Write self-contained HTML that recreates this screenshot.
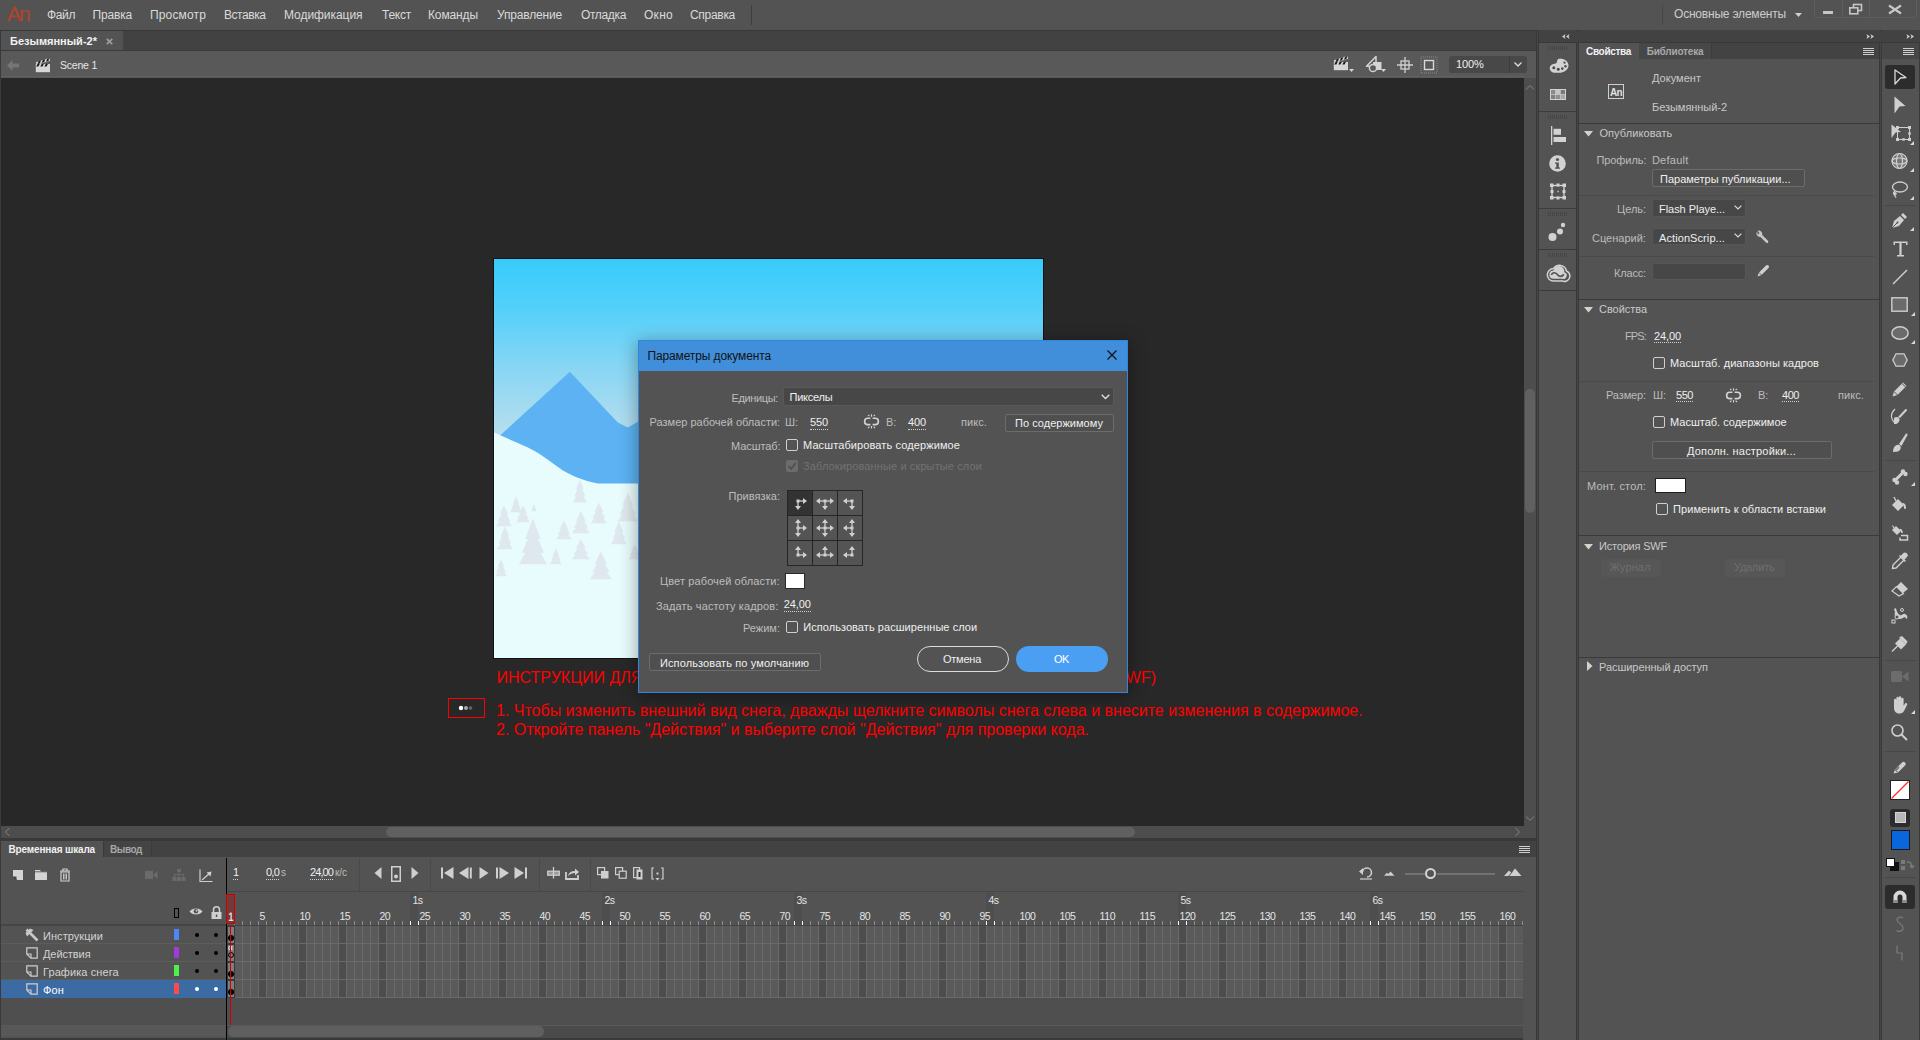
<!DOCTYPE html>
<html><head><meta charset="utf-8">
<style>
*{margin:0;padding:0;box-sizing:border-box}
html,body{width:1920px;height:1040px;overflow:hidden;background:#535353;font-family:"Liberation Sans",sans-serif;color:#d8d8d8;font-size:11px}
.a{position:absolute}
.t{position:absolute;white-space:nowrap;line-height:1}
svg.a{overflow:visible}
</style></head><body>

<div class="a" style="left:0px;top:0px;width:1920px;height:30px;background:#535353;"></div>
<div class="a" style="left:0px;top:30px;width:1920px;height:1px;background:#383838;"></div>
<div class="t" style="left:7px;top:3px;font-size:21px;color:#a9452f;letter-spacing:-2.093px;-webkit-text-stroke:0.35px #a9452f;">An</div>
<div class="t" style="left:47px;top:9px;font-size:12px;color:#dadada;letter-spacing:-0.375px;">Файл</div>
<div class="t" style="left:92.5px;top:9px;font-size:12px;color:#dadada;letter-spacing:-0.172px;">Правка</div>
<div class="t" style="left:150px;top:9px;font-size:12px;color:#dadada;letter-spacing:0.150px;">Просмотр</div>
<div class="t" style="left:224px;top:9px;font-size:12px;color:#dadada;letter-spacing:-0.443px;">Вставка</div>
<div class="t" style="left:284px;top:9px;font-size:12px;color:#dadada;letter-spacing:-0.053px;">Модификация</div>
<div class="t" style="left:382px;top:9px;font-size:12px;color:#dadada;letter-spacing:-0.242px;">Текст</div>
<div class="t" style="left:428px;top:9px;font-size:12px;color:#dadada;letter-spacing:-0.120px;">Команды</div>
<div class="t" style="left:497px;top:9px;font-size:12px;color:#dadada;letter-spacing:-0.171px;">Управление</div>
<div class="t" style="left:581px;top:9px;font-size:12px;color:#dadada;letter-spacing:-0.347px;">Отладка</div>
<div class="t" style="left:644px;top:9px;font-size:12px;color:#dadada;letter-spacing:0.279px;">Окно</div>
<div class="t" style="left:690px;top:9px;font-size:12px;color:#dadada;letter-spacing:-0.296px;">Справка</div>
<div class="a" style="left:751px;top:5px;width:1px;height:20px;background:#3f3f3f;"></div>
<div class="a" style="left:1662px;top:5px;width:1px;height:20px;background:#454545;"></div>
<div class="t" style="left:1674px;top:8px;font-size:12px;color:#cccccc;letter-spacing:-0.204px;">Основные элементы</div>
<svg class="a" style="left:1795px;top:13px;" width="7" height="4" viewBox="0 0 7 4"><path d="M0 0H7L3.5 4Z" fill="#cfcfcf"/></svg>
<div class="a" style="left:1814px;top:-2px;width:103px;height:20px;border:1px solid #5e5e5e;border-radius:3px"></div>
<div class="a" style="left:1842px;top:0px;width:1px;height:18px;background:#5e5e5e;"></div>
<div class="a" style="left:1869px;top:0px;width:1px;height:18px;background:#5e5e5e;"></div>
<div class="a" style="left:1823px;top:11px;width:10px;height:3px;background:#c6c6c6;"></div>
<svg class="a" style="left:1849px;top:4px;" width="14" height="11" viewBox="0 0 14 11"><rect x="4.5" y="0.5" width="8" height="6" fill="none" stroke="#c6c6c6" stroke-width="1.6"/><rect x="0.8" y="3.8" width="8" height="6" fill="#535353" stroke="#c6c6c6" stroke-width="1.6"/></svg>
<svg class="a" style="left:1888px;top:5px;" width="14" height="9" viewBox="0 0 14 9"><path d="M1 0.5L13 8.5M13 0.5L1 8.5" stroke="#c6c6c6" stroke-width="2.2"/></svg>
<div class="a" style="left:0px;top:31px;width:1537px;height:20px;background:#424242;"></div>
<div class="a" style="left:0px;top:31px;width:1px;height:1009px;background:#3a3a3a;"></div>
<div class="a" style="left:1px;top:31px;width:122px;height:20px;background:#535353;"></div>
<div class="t" style="left:10px;top:36px;font-size:11px;color:#f2f2f2;font-weight:bold;">Безымянный-2*</div>
<svg class="a" style="left:106px;top:38px;" width="7" height="7" viewBox="0 0 7 7"><path d="M0.8 0.8L6.2 6.2M6.2 0.8L0.8 6.2" stroke="#9b9b9b" stroke-width="1.8"/></svg>
<div class="a" style="left:1px;top:51px;width:1536px;height:27px;background:#595959;"></div>
<div class="a" style="left:0px;top:50px;width:1537px;height:1px;background:#3a3a3a;"></div>
<div class="a" style="left:1px;top:76px;width:1523px;height:1px;background:#606060;"></div>
<svg class="a" style="left:7px;top:60px;" width="12" height="11" viewBox="0 0 12 11"><path d="M0 5.5L5.5 0V3.5H12V7.5H5.5V11Z" fill="#767676"/></svg>
<svg class="a" style="left:35px;top:57px;" width="22" height="18" viewBox="0 0 22 18"><rect x="0.8" y="7" width="14.2" height="8.2" fill="#d6d6d6"/><path d="M0.8 5.2L14.2 1L15.2 3.8L1.6 8Z" fill="#d6d6d6"/><path d="M3.6 4.3L6 3.6L4.8 6.6L2.4 7.3ZM7.9 3L10.3 2.3L9.1 5.3L6.7 6ZM12.2 1.7L14.2 1.1L13.4 4L11 4.7Z" fill="#1c1c1c"/><path d="M2.5 7H4.7L3.4 9.4H1.2ZM6.6 7H8.8L7.5 9.4H5.3ZM10.7 7H12.9L11.6 9.4H9.4Z" fill="#1c1c1c"/></svg>
<div class="t" style="left:60px;top:60px;font-size:10.5px;color:#e6e6e6;letter-spacing:-0.218px;">Scene 1</div>
<svg class="a" style="left:1333px;top:55px;" width="22" height="18" viewBox="0 0 22 18"><rect x="0.8" y="7" width="14.2" height="8.2" fill="#d6d6d6"/><path d="M0.8 5.2L14.2 1L15.2 3.8L1.6 8Z" fill="#d6d6d6"/><path d="M3.6 4.3L6 3.6L4.8 6.6L2.4 7.3ZM7.9 3L10.3 2.3L9.1 5.3L6.7 6ZM12.2 1.7L14.2 1.1L13.4 4L11 4.7Z" fill="#1c1c1c"/><path d="M2.5 7H4.7L3.4 9.4H1.2ZM6.6 7H8.8L7.5 9.4H5.3ZM10.7 7H12.9L11.6 9.4H9.4Z" fill="#1c1c1c"/><path d="M16 14H21L18.5 17Z" fill="#d4d4d4"/></svg>
<svg class="a" style="left:1365px;top:55px;" width="22" height="18" viewBox="0 0 22 18"><path d="M1.5 11.3L11 1.5V11.3Z" fill="none" stroke="#d4d4d4" stroke-width="1.5" stroke-linejoin="round"/><rect x="8" y="7" width="8.5" height="8" fill="#d4d4d4"/><circle cx="8" cy="13" r="3.6" fill="#595959" stroke="#d4d4d4" stroke-width="1.5"/><path d="M16 14H21L18.5 17Z" fill="#d4d4d4"/></svg>
<svg class="a" style="left:1397px;top:57px;" width="16" height="16" viewBox="0 0 16 16"><path d="M8 0V16M0 8H16" stroke="#d0d0d0" stroke-width="1.3"/><rect x="4" y="4" width="8" height="8" fill="none" stroke="#d0d0d0" stroke-width="1.3"/></svg>
<svg class="a" style="left:1421px;top:57px;" width="16" height="16" viewBox="0 0 16 16"><rect x="0" y="0" width="16" height="16" fill="none" stroke="#8a8a8a" stroke-width="1" stroke-dasharray="1 1"/><rect x="3.5" y="3.5" width="9" height="9" fill="#595959" stroke="#d8d8d8" stroke-width="1.4"/></svg>
<div class="a" style="left:1449px;top:56px;width:78px;height:17px;background:#484848;border-radius:3px"></div>
<div class="a" style="left:1509px;top:56px;width:1px;height:17px;background:#3d3d3d;"></div>
<div class="t" style="left:1456px;top:59px;font-size:11px;color:#f0f0f0;letter-spacing:-0.158px;">100%</div>
<svg class="a" style="left:1514px;top:62px;" width="8" height="5" viewBox="0 0 8 5"><path d="M0.5 0.5L4 4L7.5 0.5" fill="none" stroke="#dedede" stroke-width="1.3"/></svg>
<div class="a" style="left:1px;top:78px;width:1523px;height:748px;background:#282828;"></div>
<div class="a" style="left:1524px;top:78px;width:12px;height:748px;background:#4d4d4d;"></div>
<svg class="a" style="left:1525px;top:84px;" width="10" height="6" viewBox="0 0 10 6"><path d="M1 5.5L5 1.5L9 5.5" fill="none" stroke="#6e6e6e" stroke-width="1.2"/></svg>
<div class="a" style="left:1525px;top:389px;width:10px;height:124px;background:#606060;border-radius:5px"></div>
<svg class="a" style="left:1525px;top:816px;" width="10" height="6" viewBox="0 0 10 6"><path d="M1 0.5L5 4.5L9 0.5" fill="none" stroke="#6e6e6e" stroke-width="1.2"/></svg>
<div class="a" style="left:1px;top:826px;width:1535px;height:12px;background:#4d4d4d;"></div>
<svg class="a" style="left:4px;top:827px;" width="6" height="10" viewBox="0 0 6 10"><path d="M5.5 1L1.5 5L5.5 9" fill="none" stroke="#6e6e6e" stroke-width="1.2"/></svg>
<div class="a" style="left:386px;top:827px;width:749px;height:10px;background:#606060;border-radius:5px"></div>
<svg class="a" style="left:1515px;top:827px;" width="6" height="10" viewBox="0 0 6 10"><path d="M0.5 1L4.5 5L0.5 9" fill="none" stroke="#6e6e6e" stroke-width="1.2"/></svg>
<div class="a" style="left:0px;top:838px;width:1537px;height:3px;background:#393939;"></div>
<div class="a" style="left:1536px;top:31px;width:1px;height:1009px;background:#383838;"></div>
<div class="a" style="left:1537px;top:31px;width:1px;height:1009px;background:#464646;"></div>
<div class="a" style="left:1538px;top:31px;width:1px;height:1009px;background:#393939;"></div>
<div class="a" style="left:493px;top:258px;width:551px;height:401px;background:#111;"></div>
<svg class="a" style="left:494px;top:259px" width="549" height="399" viewBox="0 0 550 400" preserveAspectRatio="none"><defs><linearGradient id="sky" x1="0" y1="0" x2="0" y2="1"><stop offset="0" stop-color="#38cbfb"/><stop offset="0.12" stop-color="#52d0fa"/><stop offset="0.28" stop-color="#8ad6f4"/><stop offset="0.44" stop-color="#b7deee"/><stop offset="1" stop-color="#c4e2ee"/></linearGradient></defs>
<rect x="0" y="0" width="550" height="400" fill="url(#sky)"/>
<path d="M6 177L76 113L124 164L134 169L150 160L200 150L260 160L400 170L550 190V400H0Z" fill="#5cb2f2"/>
<path d="M0 174L34 189C50 197 60 206 69 212C82 219 92 223 104 225H550V400H0Z" fill="#e9fcfd"/>
<path d="M86.0 221.0L82.2 231.3H89.8ZM86.0 225.6L80.4 238.2H91.6ZM86.0 231.3L79.0 244.0H93.0ZM22.0 238.0L18.7 245.2H25.3ZM22.0 241.2L17.2 250.0H26.8ZM22.0 245.2L16.0 254.0H28.0ZM40.0 246.0L38.4 249.2H41.6ZM40.0 247.4L37.6 251.2H42.4ZM40.0 249.2L37.0 253.0H43.0ZM10.0 247.0L5.6 256.4H14.4ZM10.0 251.2L3.6 262.8H16.4ZM10.0 256.4L2.0 268.0H18.0ZM29.0 247.0L25.1 254.7H32.9ZM29.0 250.4L23.4 259.8H34.6ZM29.0 254.7L22.0 264.0H36.0ZM39.0 260.0L31.3 280.7H46.7ZM39.0 269.2L27.8 294.5H50.2ZM39.0 280.7L25.0 306.0H53.0ZM11.0 268.0L6.6 278.4H15.4ZM11.0 272.6L4.6 285.2H17.4ZM11.0 278.4L3.0 291.0H19.0ZM70.0 262.0L65.6 270.6H74.4ZM70.0 265.8L63.6 276.2H76.4ZM70.0 270.6L62.0 281.0H78.0ZM87.0 253.0L82.0 262.9H92.0ZM87.0 257.4L79.8 269.5H94.2ZM87.0 262.9L78.0 275.0H96.0ZM87.0 281.0L82.0 290.0H92.0ZM87.0 285.0L79.8 296.0H94.2ZM87.0 290.0L78.0 301.0H96.0ZM105.0 244.0L100.6 253.4H109.4ZM105.0 248.2L98.6 259.8H111.4ZM105.0 253.4L97.0 265.0H113.0ZM134.0 234.0L128.5 247.1H139.5ZM134.0 239.8L126.0 255.8H142.0ZM134.0 247.1L124.0 263.0H144.0ZM125.0 263.0L120.6 273.4H129.4ZM125.0 267.6L118.6 280.2H131.4ZM125.0 273.4L117.0 286.0H133.0ZM107.0 293.0L101.0 305.6H113.0ZM107.0 298.6L98.2 314.0H115.8ZM107.0 305.6L96.0 321.0H118.0ZM62.0 290.0L58.7 297.2H65.3ZM62.0 293.2L57.2 302.0H66.8ZM62.0 297.2L56.0 306.0H68.0ZM7.0 301.0L3.7 308.6H10.3ZM7.0 304.4L2.2 313.8H11.8ZM7.0 308.6L1.0 318.0H13.0ZM141.0 286.0L137.7 292.8H144.3ZM141.0 289.0L136.2 297.2H145.8ZM141.0 292.8L135.0 301.0H147.0Z" fill="#dfe6ed" fill-opacity="0.9"/></svg>
<div class="t" style="left:496.5px;top:670px;font-size:16px;color:#ff0000;">ИНСТРУКЦИИ ДЛЯ</div>
<div class="t" style="right:764px;top:670px;font-size:16px;color:#ff0000;">WF)</div>
<div class="a" style="left:448px;top:698px;width:37px;height:20px;border:1px solid #ff0000"></div>
<svg class="a" style="left:455px;top:702px;" width="22" height="12" viewBox="0 0 22 12"><defs><filter id="bl"><feGaussianBlur stdDeviation="0.9"/></filter></defs><defs><filter id="bl2"><feGaussianBlur stdDeviation="0.5"/></filter></defs><g filter="url(#bl2)"><circle cx="6" cy="6" r="2.2" fill="#fff"/><circle cx="11" cy="6" r="2" fill="#aaa"/><circle cx="15.5" cy="6" r="1.8" fill="#666"/></g></svg>
<div class="t" style="left:496px;top:703px;font-size:16px;color:#ff0000;">1. Чтобы изменить внешний вид снега, дважды щелкните символы снега слева и внесите изменения в содержимое.</div>
<div class="t" style="left:496px;top:722px;font-size:16px;color:#ff0000;">2. Откройте панель &quot;Действия&quot; и выберите слой &quot;Действия&quot; для проверки кода.</div>
<div class="a" style="left:638px;top:340px;width:490px;height:353px;box-shadow:0 3px 16px 2px rgba(0,0,0,0.3)"></div>
<div class="a" style="left:638px;top:340px;width:490px;height:353px;background:#2f86df;"></div>
<div class="a" style="left:639px;top:341px;width:488px;height:30px;background:#418fdb;"></div>
<div class="a" style="left:639px;top:371px;width:488px;height:321px;background:#535353;"></div>
<div class="t" style="left:647.4px;top:350px;font-size:12px;color:#121212;letter-spacing:-0.116px;">Параметры документа</div>
<svg class="a" style="left:1107px;top:350px;" width="10" height="10" viewBox="0 0 10 10"><path d="M0.5 0.5L9.5 9.5M9.5 0.5L0.5 9.5" stroke="#111" stroke-width="1.2"/></svg>
<div class="t" style="left:731.5px;top:393px;font-size:11px;color:#bdbdbd;letter-spacing:-0.360px;">Единицы:</div>
<div class="a" style="left:782.5px;top:387px;width:331.5px;height:19px;background:#474747;border:1px solid #595959;border-radius:3px"></div>
<div class="t" style="left:789.5px;top:392px;font-size:11px;color:#efefef;letter-spacing:-0.223px;">Пикселы</div>
<svg class="a" style="left:1101px;top:394px;" width="9" height="6" viewBox="0 0 9 6"><path d="M0.7 0.7L4.5 4.5L8.3 0.7" fill="none" stroke="#e0e0e0" stroke-width="1.3"/></svg>
<div class="t" style="left:649.6px;top:417px;font-size:11px;color:#bdbdbd;">Размер рабочей области:</div>
<div class="t" style="left:785px;top:417px;font-size:11px;color:#bdbdbd;letter-spacing:-0.069px;">Ш:</div>
<div class="t" style="left:810px;top:417px;font-size:11px;color:#efefef;letter-spacing:-0.117px;">550</div>
<div class="a" style="left:810px;top:429px;width:18px;height:1px;border-top:1px dotted #cfcfcf"></div>
<svg class="a" style="left:863px;top:412px;" width="17" height="19" viewBox="0 0 17 19"><path d="M7.4 6.2H4.8A3.2 3.2 0 0 0 4.8 12.6H7.4M9.6 6.2H12.2A3.2 3.2 0 0 1 12.2 12.6H9.6" fill="none" stroke="#d4d4d4" stroke-width="1.6"/><path d="M8.5 2.3V4.8M8.5 14V16.5M5 2.8L6.4 4.2M12 2.8L10.6 4.2M5 16L6.4 14.6M12 16L10.6 14.6" stroke="#d4d4d4" stroke-width="1.1"/></svg>
<div class="t" style="left:886px;top:417px;font-size:11px;color:#bdbdbd;letter-spacing:-0.197px;">В:</div>
<div class="t" style="left:908px;top:417px;font-size:11px;color:#efefef;letter-spacing:-0.117px;">400</div>
<div class="a" style="left:908px;top:429px;width:18px;height:1px;border-top:1px dotted #cfcfcf"></div>
<div class="t" style="left:961px;top:417px;font-size:11px;color:#bdbdbd;letter-spacing:0.081px;">пикс.</div>
<div class="a" style="left:1004.5px;top:413.5px;width:109.5px;height:18px;border:1px solid #6c6c6c;border-radius:2px;background:#4f4f4f"></div>
<div class="t" style="left:1015px;top:418px;font-size:11px;color:#efefef;letter-spacing:0.029px;">По содержимому</div>
<div class="t" style="left:731px;top:441px;font-size:11px;color:#bdbdbd;letter-spacing:-0.077px;">Масштаб:</div>
<div class="a" style="left:786px;top:439px;width:12px;height:12px;border:1px solid #cfcfcf;border-radius:2px"></div>
<div class="t" style="left:803px;top:440px;font-size:11px;color:#efefef;letter-spacing:0.108px;">Масштабировать содержимое</div>
<div class="a" style="left:786px;top:460px;width:12px;height:12px;background:#6c6c6c;border-radius:2px"></div>
<svg class="a" style="left:786px;top:460px;" width="12" height="12" viewBox="0 0 12 12"><path d="M2.5 6L5 8.8L9.8 3.2" fill="none" stroke="#505050" stroke-width="1.8"/></svg>
<div class="t" style="left:803px;top:461px;font-size:11px;color:#727272;letter-spacing:0.119px;">Заблокированные и скрытые слои</div>
<div class="t" style="left:728.5px;top:491px;font-size:11px;color:#bdbdbd;letter-spacing:0.043px;">Привязка:</div>
<div class="a" style="left:787px;top:490px;width:76px;height:76px;background:#262626;"></div>
<div class="a" style="left:788px;top:491px;width:24px;height:24px;background:#333333;"></div>
<div class="a" style="left:813px;top:491px;width:24px;height:24px;background:#545454;"></div>
<div class="a" style="left:838px;top:491px;width:24px;height:24px;background:#545454;"></div>
<div class="a" style="left:788px;top:516px;width:24px;height:24px;background:#545454;"></div>
<div class="a" style="left:813px;top:516px;width:24px;height:24px;background:#545454;"></div>
<div class="a" style="left:838px;top:516px;width:24px;height:24px;background:#545454;"></div>
<div class="a" style="left:788px;top:541px;width:24px;height:24px;background:#545454;"></div>
<div class="a" style="left:813px;top:541px;width:24px;height:24px;background:#545454;"></div>
<div class="a" style="left:838px;top:541px;width:24px;height:24px;background:#545454;"></div>
<svg class="a" style="left:788px;top:491px;" width="75" height="75" viewBox="0 0 75 75"><path d="M10.0 10.0H18.0" stroke="#d0d0d0" stroke-width="1.3"/><path d="M19.0 10.0L15.0 7.0V13.0Z" fill="#d0d0d0"/><path d="M10.0 10.0V18.0" stroke="#d0d0d0" stroke-width="1.3"/><path d="M10.0 19.0L7.0 15.0H13.0Z" fill="#d0d0d0"/><rect x="8.5" y="8.5" width="3" height="3" fill="#d0d0d0"/><path d="M37.0 10.0H29.0" stroke="#d0d0d0" stroke-width="1.3"/><path d="M28.0 10.0L32.0 7.0V13.0Z" fill="#d0d0d0"/><path d="M37.0 10.0H45.0" stroke="#d0d0d0" stroke-width="1.3"/><path d="M46.0 10.0L42.0 7.0V13.0Z" fill="#d0d0d0"/><path d="M37.0 10.0V18.0" stroke="#d0d0d0" stroke-width="1.3"/><path d="M37.0 19.0L34.0 15.0H40.0Z" fill="#d0d0d0"/><rect x="35.5" y="8.5" width="3" height="3" fill="#d0d0d0"/><path d="M64.0 10.0H56.0" stroke="#d0d0d0" stroke-width="1.3"/><path d="M55.0 10.0L59.0 7.0V13.0Z" fill="#d0d0d0"/><path d="M64.0 10.0V18.0" stroke="#d0d0d0" stroke-width="1.3"/><path d="M64.0 19.0L61.0 15.0H67.0Z" fill="#d0d0d0"/><rect x="62.5" y="8.5" width="3" height="3" fill="#d0d0d0"/><path d="M10.0 37.0V29.0" stroke="#d0d0d0" stroke-width="1.3"/><path d="M10.0 28.0L7.0 32.0H13.0Z" fill="#d0d0d0"/><path d="M10.0 37.0V45.0" stroke="#d0d0d0" stroke-width="1.3"/><path d="M10.0 46.0L7.0 42.0H13.0Z" fill="#d0d0d0"/><path d="M10.0 37.0H18.0" stroke="#d0d0d0" stroke-width="1.3"/><path d="M19.0 37.0L15.0 34.0V40.0Z" fill="#d0d0d0"/><rect x="8.5" y="35.5" width="3" height="3" fill="#d0d0d0"/><path d="M37.0 37.0V29.0" stroke="#d0d0d0" stroke-width="1.3"/><path d="M37.0 28.0L34.0 32.0H40.0Z" fill="#d0d0d0"/><path d="M37.0 37.0V45.0" stroke="#d0d0d0" stroke-width="1.3"/><path d="M37.0 46.0L34.0 42.0H40.0Z" fill="#d0d0d0"/><path d="M37.0 37.0H29.0" stroke="#d0d0d0" stroke-width="1.3"/><path d="M28.0 37.0L32.0 34.0V40.0Z" fill="#d0d0d0"/><path d="M37.0 37.0H45.0" stroke="#d0d0d0" stroke-width="1.3"/><path d="M46.0 37.0L42.0 34.0V40.0Z" fill="#d0d0d0"/><rect x="35.5" y="35.5" width="3" height="3" fill="#d0d0d0"/><path d="M64.0 37.0V29.0" stroke="#d0d0d0" stroke-width="1.3"/><path d="M64.0 28.0L61.0 32.0H67.0Z" fill="#d0d0d0"/><path d="M64.0 37.0V45.0" stroke="#d0d0d0" stroke-width="1.3"/><path d="M64.0 46.0L61.0 42.0H67.0Z" fill="#d0d0d0"/><path d="M64.0 37.0H56.0" stroke="#d0d0d0" stroke-width="1.3"/><path d="M55.0 37.0L59.0 34.0V40.0Z" fill="#d0d0d0"/><rect x="62.5" y="35.5" width="3" height="3" fill="#d0d0d0"/><path d="M10.0 64.0V56.0" stroke="#d0d0d0" stroke-width="1.3"/><path d="M10.0 55.0L7.0 59.0H13.0Z" fill="#d0d0d0"/><path d="M10.0 64.0H18.0" stroke="#d0d0d0" stroke-width="1.3"/><path d="M19.0 64.0L15.0 61.0V67.0Z" fill="#d0d0d0"/><rect x="8.5" y="62.5" width="3" height="3" fill="#d0d0d0"/><path d="M37.0 64.0H29.0" stroke="#d0d0d0" stroke-width="1.3"/><path d="M28.0 64.0L32.0 61.0V67.0Z" fill="#d0d0d0"/><path d="M37.0 64.0H45.0" stroke="#d0d0d0" stroke-width="1.3"/><path d="M46.0 64.0L42.0 61.0V67.0Z" fill="#d0d0d0"/><path d="M37.0 64.0V56.0" stroke="#d0d0d0" stroke-width="1.3"/><path d="M37.0 55.0L34.0 59.0H40.0Z" fill="#d0d0d0"/><rect x="35.5" y="62.5" width="3" height="3" fill="#d0d0d0"/><path d="M64.0 64.0H56.0" stroke="#d0d0d0" stroke-width="1.3"/><path d="M55.0 64.0L59.0 61.0V67.0Z" fill="#d0d0d0"/><path d="M64.0 64.0V56.0" stroke="#d0d0d0" stroke-width="1.3"/><path d="M64.0 55.0L61.0 59.0H67.0Z" fill="#d0d0d0"/><rect x="62.5" y="62.5" width="3" height="3" fill="#d0d0d0"/></svg>
<div class="t" style="left:660px;top:576px;font-size:11px;color:#bdbdbd;letter-spacing:0.112px;">Цвет рабочей области:</div>
<div class="a" style="left:785px;top:573px;width:20px;height:16px;background:#fff;border:1px solid #2a2a2a"></div>
<div class="t" style="left:656px;top:601px;font-size:11px;color:#bdbdbd;letter-spacing:0.134px;">Задать частоту кадров:</div>
<div class="t" style="left:783.8px;top:599px;font-size:11px;color:#efefef;letter-spacing:-0.105px;">24,00</div>
<div class="a" style="left:784px;top:611px;width:27px;height:1px;border-top:1px dotted #cfcfcf"></div>
<div class="t" style="left:743px;top:623px;font-size:11px;color:#bdbdbd;">Режим:</div>
<div class="a" style="left:786px;top:621px;width:12px;height:12px;border:1px solid #cfcfcf;border-radius:2px"></div>
<div class="t" style="left:803.2px;top:622px;font-size:11px;color:#efefef;letter-spacing:0.058px;">Использовать расширенные слои</div>
<div class="a" style="left:649.3px;top:653.2px;width:171.7px;height:18.3px;border:1px solid #6c6c6c;border-radius:2px;background:#4f4f4f"></div>
<div class="t" style="left:660px;top:658px;font-size:11px;color:#efefef;letter-spacing:0.109px;">Использовать по умолчанию</div>
<div class="a" style="left:917px;top:646px;width:92px;height:26px;border:1.5px solid #dcdcdc;border-radius:13px"></div>
<div class="t" style="left:943px;top:654px;font-size:11px;color:#efefef;letter-spacing:-0.244px;">Отмена</div>
<div class="a" style="left:1016px;top:646px;width:92px;height:26px;background:#4b9ff2;border-radius:13px"></div>
<div class="t" style="left:1054px;top:654px;font-size:11px;color:#ffffff;letter-spacing:-0.447px;">OK</div>
<div class="a" style="left:1px;top:841px;width:1535px;height:199px;background:#535353;"></div>
<div class="a" style="left:1px;top:841px;width:1535px;height:16px;background:#424242;"></div>
<div class="a" style="left:1px;top:841px;width:102px;height:16px;background:#535353;"></div>
<div class="a" style="left:103px;top:841px;width:1px;height:16px;background:#3a3a3a;"></div>
<div class="t" style="left:8.5px;top:845px;font-size:10px;color:#f0f0f0;font-weight:bold;letter-spacing:-0.152px;">Временная шкала</div>
<div class="a" style="left:104px;top:841px;width:47px;height:16px;background:#444444;"></div>
<div class="a" style="left:151px;top:841px;width:1px;height:16px;background:#3a3a3a;"></div>
<div class="t" style="left:110px;top:845px;font-size:10px;color:#a6a6a6;font-weight:bold;letter-spacing:-0.421px;">Вывод</div>
<svg class="a" style="left:1519px;top:846px;" width="11" height="8" viewBox="0 0 11 8"><path d="M0 0.5H11M0 2.5H11M0 4.5H11M0 6.5H11" stroke="#cfcfcf" stroke-width="1"/></svg>
<svg class="a" style="left:13px;top:870px;" width="11" height="11" viewBox="0 0 11 11"><path d="M0 0H10V10H4L0 6Z" fill="#d4d4d4"/><path d="M0.5 6.5H3.5V9.5Z" fill="#535353"/><path d="M1 7L3.5 9.8" stroke="#222" stroke-width="0.8"/></svg>
<svg class="a" style="left:35px;top:869px;" width="13" height="12" viewBox="0 0 13 12"><path d="M0 1H5L6 2.5H12V11H0Z" fill="#d4d4d4"/><path d="M0 2.8H12" stroke="#333" stroke-width="0.7"/></svg>
<svg class="a" style="left:59px;top:868px;" width="12" height="14" viewBox="0 0 12 14"><path d="M1 3H11M4 3V1H8V3" fill="none" stroke="#cfcfcf" stroke-width="1.2"/><path d="M2 4H10V13H2Z" fill="none" stroke="#cfcfcf" stroke-width="1.2"/><path d="M4.5 5.5V11.5M6 5.5V11.5M7.5 5.5V11.5" stroke="#cfcfcf" stroke-width="0.9"/></svg>
<svg class="a" style="left:145px;top:870px;" width="13" height="10" viewBox="0 0 13 10"><rect x="0" y="1" width="8" height="8" fill="#6a6a6a"/><path d="M8 5L12.5 1V9Z" fill="#6a6a6a"/></svg>
<svg class="a" style="left:172px;top:869px;" width="14" height="13" viewBox="0 0 14 13"><rect x="5" y="0" width="4" height="3" fill="#6a6a6a"/><path d="M7 3V5.5M2.5 5.5H11.5M2.5 5.5V8M7 5.5V8M11.5 5.5V8" stroke="#6a6a6a" stroke-width="1"/><rect x="0.5" y="8" width="4" height="4" fill="#6a6a6a"/><rect x="5" y="8" width="4" height="4" fill="#6a6a6a"/><rect x="9.5" y="8" width="4" height="4" fill="#6a6a6a"/></svg>
<svg class="a" style="left:199px;top:869px;" width="14" height="14" viewBox="0 0 14 14"><path d="M1 0.5V12.5H13.5" fill="none" stroke="#cfcfcf" stroke-width="1.2"/><path d="M3 11L11 4" stroke="#cfcfcf" stroke-width="1.2"/><path d="M12.5 2.5L7.5 3.5L11.5 7.5Z" fill="#cfcfcf"/></svg>
<div class="a" style="left:174px;top:908px;width:5px;height:10px;border:1px solid #000"></div>
<svg class="a" style="left:189px;top:907px;" width="14" height="9" viewBox="0 0 14 9"><path d="M0.5 4.5C3 0.5 11 0.5 13.5 4.5C11 8.5 3 8.5 0.5 4.5Z" fill="#d0d0d0"/><circle cx="7" cy="4.3" r="2.3" fill="#535353"/><circle cx="7.6" cy="3.7" r="0.9" fill="#d0d0d0"/></svg>
<svg class="a" style="left:211px;top:906px;" width="11" height="13" viewBox="0 0 11 13"><path d="M2.5 6V3.8A3 3 0 0 1 8.5 3.8V6" fill="none" stroke="#d0d0d0" stroke-width="1.5"/><rect x="0.5" y="6" width="10" height="7" fill="#d0d0d0"/><rect x="4.8" y="8.5" width="1.5" height="2.5" fill="#535353"/></svg>
<div class="a" style="left:1px;top:891px;width:225px;height:1px;background:#535353;"></div>
<div class="a" style="left:1px;top:924px;width:225px;height:2px;background:#454545;"></div>
<div class="a" style="left:1px;top:943px;width:225px;height:1px;background:#5c5c5c;"></div>
<svg class="a" style="left:25px;top:928px;" width="15" height="14" viewBox="0 0 15 14"><path d="M1.5 1.5L12.5 12.5" stroke="#c8c8c8" stroke-width="2.6"/><path d="M0.5 5L5 0.5L8.5 2L2 8.5Z" fill="#c8c8c8"/></svg>
<div class="t" style="left:43px;top:931px;font-size:11px;color:#d2d2d2;letter-spacing:0.059px;">Инструкции</div>
<div class="a" style="left:174px;top:929px;width:5px;height:11px;background:#4e86f6;"></div>
<div class="a" style="left:195px;top:933px;width:4px;height:4px;background:#000000;border-radius:2px"></div>
<div class="a" style="left:214px;top:933px;width:4px;height:4px;background:#000000;border-radius:2px"></div>
<div class="a" style="left:1px;top:961px;width:225px;height:1px;background:#5c5c5c;"></div>
<svg class="a" style="left:26px;top:947px;" width="12" height="12" viewBox="0 0 12 12"><path d="M0.8 0.8H11.2V11.2H5L0.8 7Z" fill="none" stroke="#d0d0d0" stroke-width="1.2"/><path d="M0.8 7H5V11.2" fill="none" stroke="#d0d0d0" stroke-width="1.1"/></svg>
<div class="t" style="left:43px;top:949px;font-size:11px;color:#d2d2d2;letter-spacing:-0.087px;">Действия</div>
<div class="a" style="left:174px;top:947px;width:5px;height:11px;background:#a03ad8;"></div>
<div class="a" style="left:195px;top:951px;width:4px;height:4px;background:#000000;border-radius:2px"></div>
<div class="a" style="left:214px;top:951px;width:4px;height:4px;background:#000000;border-radius:2px"></div>
<div class="a" style="left:1px;top:979px;width:225px;height:1px;background:#5c5c5c;"></div>
<svg class="a" style="left:26px;top:965px;" width="12" height="12" viewBox="0 0 12 12"><path d="M0.8 0.8H11.2V11.2H5L0.8 7Z" fill="none" stroke="#d0d0d0" stroke-width="1.2"/><path d="M0.8 7H5V11.2" fill="none" stroke="#d0d0d0" stroke-width="1.1"/></svg>
<div class="t" style="left:43px;top:967px;font-size:11px;color:#d2d2d2;letter-spacing:0.090px;">Графика снега</div>
<div class="a" style="left:174px;top:965px;width:5px;height:11px;background:#4ef04e;"></div>
<div class="a" style="left:195px;top:969px;width:4px;height:4px;background:#000000;border-radius:2px"></div>
<div class="a" style="left:214px;top:969px;width:4px;height:4px;background:#000000;border-radius:2px"></div>
<div class="a" style="left:1px;top:980px;width:225px;height:18px;background:#3c6aa3;"></div>
<svg class="a" style="left:26px;top:983px;" width="12" height="12" viewBox="0 0 12 12"><path d="M0.8 0.8H11.2V11.2H5L0.8 7Z" fill="none" stroke="#d0d0d0" stroke-width="1.2"/><path d="M0.8 7H5V11.2" fill="none" stroke="#d0d0d0" stroke-width="1.1"/></svg>
<div class="t" style="left:43px;top:985px;font-size:11px;color:#ffffff;letter-spacing:0.148px;">Фон</div>
<div class="a" style="left:174px;top:983px;width:5px;height:11px;background:#ff4a4a;"></div>
<div class="a" style="left:195px;top:987px;width:4px;height:4px;background:#ffffff;border-radius:2px"></div>
<div class="a" style="left:214px;top:987px;width:4px;height:4px;background:#ffffff;border-radius:2px"></div>
<div class="a" style="left:1px;top:998px;width:225px;height:27px;background:#4f4f4f;"></div>
<div class="a" style="left:1px;top:1025px;width:225px;height:11px;background:#585858;"></div>
<div class="a" style="left:0px;top:1038px;width:1537px;height:2px;background:#3a3a3a;"></div>
<div class="a" style="left:226px;top:858px;width:1px;height:182px;background:#000000;"></div>
<div class="t" style="left:233px;top:867px;font-size:11px;color:#f0f0f0;">1</div>
<div class="a" style="left:233px;top:879px;width:5px;height:1px;border-top:1px dotted #cfcfcf"></div>
<div class="t" style="left:266px;top:867px;font-size:11px;color:#f0f0f0;letter-spacing:-0.763px;">0,0</div>
<div class="t" style="left:281px;top:868px;font-size:10px;color:#bdbdbd;">s</div>
<div class="a" style="left:266px;top:879px;width:13px;height:1px;border-top:1px dotted #cfcfcf"></div>
<div class="t" style="left:310px;top:867px;font-size:11px;color:#f0f0f0;letter-spacing:-0.905px;">24,00</div>
<div class="t" style="left:335px;top:868px;font-size:10px;color:#bdbdbd;letter-spacing:-0.051px;">к/с</div>
<div class="a" style="left:310px;top:879px;width:23px;height:1px;border-top:1px dotted #cfcfcf"></div>
<div class="a" style="left:359px;top:858px;width:1px;height:33px;background:#4a4a4a;"></div>
<svg class="a" style="left:374px;top:867px;" width="8" height="12" viewBox="0 0 8 12"><path d="M7.5 0V12L0.5 6Z" fill="#cfcfcf"/></svg>
<svg class="a" style="left:391px;top:866px;" width="10" height="16" viewBox="0 0 10 16"><rect x="0.75" y="0.75" width="8.5" height="14.5" fill="none" stroke="#cfcfcf" stroke-width="1.5"/><circle cx="5" cy="10.5" r="2" fill="#cfcfcf"/></svg>
<svg class="a" style="left:411px;top:867px;" width="8" height="12" viewBox="0 0 8 12"><path d="M0.5 0V12L7.5 6Z" fill="#cfcfcf"/></svg>
<div class="a" style="left:430px;top:858px;width:1px;height:33px;background:#4a4a4a;"></div>
<svg class="a" style="left:441px;top:867px;" width="13" height="12" viewBox="0 0 13 12"><rect x="0" y="0.5" width="2" height="11" fill="#d0d0d0"/><path d="M12.5 0V12L3 6Z" fill="#d0d0d0"/></svg>
<svg class="a" style="left:459px;top:867px;" width="13" height="12" viewBox="0 0 13 12"><path d="M9.5 0V12L0 6Z" fill="#d0d0d0"/><rect x="10.8" y="0.5" width="2" height="11" fill="#d0d0d0"/></svg>
<svg class="a" style="left:479px;top:867px;" width="10" height="12" viewBox="0 0 10 12"><path d="M0.5 0V12L9.5 6Z" fill="#d0d0d0"/></svg>
<svg class="a" style="left:496px;top:867px;" width="13" height="12" viewBox="0 0 13 12"><rect x="0" y="0.5" width="2" height="11" fill="#d0d0d0"/><path d="M3.5 0V12L13 6Z" fill="#d0d0d0"/></svg>
<svg class="a" style="left:514px;top:867px;" width="13" height="12" viewBox="0 0 13 12"><path d="M0.5 0V12L10 6Z" fill="#d0d0d0"/><rect x="11" y="0.5" width="2" height="11" fill="#d0d0d0"/></svg>
<div class="a" style="left:539px;top:858px;width:1px;height:33px;background:#4a4a4a;"></div>
<svg class="a" style="left:547px;top:867px;" width="13" height="12" viewBox="0 0 13 12"><rect x="0.7" y="4.2" width="11.6" height="4" fill="#9a9a9a" stroke="#d0d0d0" stroke-width="1.2"/><path d="M6.5 0V11.5" stroke="#d0d0d0" stroke-width="1.3"/></svg>
<svg class="a" style="left:565px;top:866px;" width="15" height="14" viewBox="0 0 15 14"><path d="M1 6V13H13V9" fill="none" stroke="#cfcfcf" stroke-width="1.8"/><path d="M3 10C4 6 7 5 10 5V2.5L14 6L10 9.5V7C7.5 7 5 8 3 10Z" fill="#cfcfcf"/></svg>
<div class="a" style="left:590px;top:858px;width:1px;height:33px;background:#4a4a4a;"></div>
<svg class="a" style="left:597px;top:867px;" width="12" height="12" viewBox="0 0 12 12"><rect x="0.6" y="0.6" width="7" height="7" fill="none" stroke="#cfcfcf" stroke-width="1.2"/><rect x="4" y="4" width="7.5" height="7.5" fill="#cfcfcf"/></svg>
<svg class="a" style="left:615px;top:867px;" width="12" height="12" viewBox="0 0 12 12"><rect x="0.6" y="0.6" width="7" height="7" fill="none" stroke="#cfcfcf" stroke-width="1.2"/><rect x="4.2" y="4.2" width="7" height="7" fill="#535353" stroke="#cfcfcf" stroke-width="1.2"/></svg>
<svg class="a" style="left:633px;top:867px;" width="11" height="13" viewBox="0 0 11 13"><rect x="0.6" y="0.6" width="6" height="10" fill="none" stroke="#cfcfcf" stroke-width="1.2"/><rect x="3.5" y="2.5" width="6" height="10" fill="#cfcfcf"/><rect x="5.5" y="5" width="2" height="5" fill="#333"/></svg>
<svg class="a" style="left:651px;top:867px;" width="13" height="14" viewBox="0 0 13 14"><path d="M3 1H1V12H3M10 1H12V12H10" fill="none" stroke="#cfcfcf" stroke-width="1.2"/><rect x="5.5" y="5.5" width="2" height="2" fill="#cfcfcf"/><path d="M4.5 11H8.5L6.5 13.5Z" fill="#cfcfcf"/></svg>
<svg class="a" style="left:1359px;top:866px;" width="14" height="14" viewBox="0 0 14 14"><path d="M3.5 6A4.5 4.5 0 1 1 8 11" fill="none" stroke="#cfcfcf" stroke-width="1.5"/><path d="M0 5.5L4 2V9Z" fill="#cfcfcf"/><path d="M1 13H13" stroke="#cfcfcf" stroke-width="1.2"/></svg>
<svg class="a" style="left:1384px;top:871px;" width="11" height="5" viewBox="0 0 11 5"><path d="M0 4.8L3 1.8L4.2 3L6.5 0.5L10.5 4.8Z" fill="#cfcfcf"/></svg>
<div class="a" style="left:1405px;top:873px;width:20px;height:2px;background:#727272;"></div>
<div class="a" style="left:1437px;top:873px;width:58px;height:2px;background:#727272;"></div>
<div class="a" style="left:1425px;top:868px;width:11px;height:11px;border:2px solid #d4d4d4;border-radius:50%;background:#535353"></div>
<svg class="a" style="left:1504px;top:868px;" width="18" height="9" viewBox="0 0 18 9"><path d="M0 8L5 2.5L7.5 5L5 8Z" fill="#cfcfcf"/><path d="M5 8L11 0.5L17.5 8Z" fill="#cfcfcf"/><path d="M4.6 8.2L8.6 3.4" stroke="#535353" stroke-width="0.9"/></svg>
<div class="a" style="left:227px;top:891px;width:1309px;height:1px;background:#464646;"></div>
<div class="a" style="left:227px;top:892px;width:1296px;height:33px;background:#535353;"></div>
<div class="a" style="left:227px;top:925px;width:1296px;height:1px;background:#444444;"></div>
<div class="a" style="left:410px;top:893px;width:8px;height:32px;background:#4e4e4e;"></div>
<div class="a" style="left:602px;top:893px;width:8px;height:32px;background:#4e4e4e;"></div>
<div class="a" style="left:794px;top:893px;width:8px;height:32px;background:#4e4e4e;"></div>
<div class="a" style="left:986px;top:893px;width:8px;height:32px;background:#4e4e4e;"></div>
<div class="a" style="left:1178px;top:893px;width:8px;height:32px;background:#4e4e4e;"></div>
<div class="a" style="left:1370px;top:893px;width:8px;height:32px;background:#4e4e4e;"></div>
<svg class="a" style="left:227px;top:892px;" width="1296" height="34" viewBox="0 0 1296 34"><path d="M7.5 29V33M15.5 29V33M23.5 29V33M31.5 29V33M39.5 29V33M47.5 29V33M55.5 29V33M63.5 29V33M71.5 29V33M79.5 29V33M87.5 29V33M95.5 29V33M103.5 29V33M111.5 29V33M119.5 29V33M127.5 29V33M135.5 29V33M143.5 29V33M151.5 29V33M159.5 29V33M167.5 29V33M175.5 29V33M183.5 29V33M191.5 29V33M199.5 29V33M207.5 29V33M215.5 29V33M223.5 29V33M231.5 29V33M239.5 29V33M247.5 29V33M255.5 29V33M263.5 29V33M271.5 29V33M279.5 29V33M287.5 29V33M295.5 29V33M303.5 29V33M311.5 29V33M319.5 29V33M327.5 29V33M335.5 29V33M343.5 29V33M351.5 29V33M359.5 29V33M367.5 29V33M375.5 29V33M383.5 29V33M391.5 29V33M399.5 29V33M407.5 29V33M415.5 29V33M423.5 29V33M431.5 29V33M439.5 29V33M447.5 29V33M455.5 29V33M463.5 29V33M471.5 29V33M479.5 29V33M487.5 29V33M495.5 29V33M503.5 29V33M511.5 29V33M519.5 29V33M527.5 29V33M535.5 29V33M543.5 29V33M551.5 29V33M559.5 29V33M567.5 29V33M575.5 29V33M583.5 29V33M591.5 29V33M599.5 29V33M607.5 29V33M615.5 29V33M623.5 29V33M631.5 29V33M639.5 29V33M647.5 29V33M655.5 29V33M663.5 29V33M671.5 29V33M679.5 29V33M687.5 29V33M695.5 29V33M703.5 29V33M711.5 29V33M719.5 29V33M727.5 29V33M735.5 29V33M743.5 29V33M751.5 29V33M759.5 29V33M767.5 29V33M775.5 29V33M783.5 29V33M791.5 29V33M799.5 29V33M807.5 29V33M815.5 29V33M823.5 29V33M831.5 29V33M839.5 29V33M847.5 29V33M855.5 29V33M863.5 29V33M871.5 29V33M879.5 29V33M887.5 29V33M895.5 29V33M903.5 29V33M911.5 29V33M919.5 29V33M927.5 29V33M935.5 29V33M943.5 29V33M951.5 29V33M959.5 29V33M967.5 29V33M975.5 29V33M983.5 29V33M991.5 29V33M999.5 29V33M1007.5 29V33M1015.5 29V33M1023.5 29V33M1031.5 29V33M1039.5 29V33M1047.5 29V33M1055.5 29V33M1063.5 29V33M1071.5 29V33M1079.5 29V33M1087.5 29V33M1095.5 29V33M1103.5 29V33M1111.5 29V33M1119.5 29V33M1127.5 29V33M1135.5 29V33M1143.5 29V33M1151.5 29V33M1159.5 29V33M1167.5 29V33M1175.5 29V33M1183.5 29V33M1191.5 29V33M1199.5 29V33M1207.5 29V33M1215.5 29V33M1223.5 29V33M1231.5 29V33M1239.5 29V33M1247.5 29V33M1255.5 29V33M1263.5 29V33M1271.5 29V33M1279.5 29V33M1287.5 29V33M1295.5 29V33" stroke="#8c8c8c" stroke-width="1"/></svg>
<div class="a" style="left:410px;top:921px;width:1px;height:4px;background:#ffffff;"></div>
<div class="a" style="left:418px;top:921px;width:1px;height:4px;background:#ffffff;"></div>
<div class="a" style="left:602px;top:921px;width:1px;height:4px;background:#ffffff;"></div>
<div class="a" style="left:610px;top:921px;width:1px;height:4px;background:#ffffff;"></div>
<div class="a" style="left:794px;top:921px;width:1px;height:4px;background:#ffffff;"></div>
<div class="a" style="left:802px;top:921px;width:1px;height:4px;background:#ffffff;"></div>
<div class="a" style="left:986px;top:921px;width:1px;height:4px;background:#ffffff;"></div>
<div class="a" style="left:994px;top:921px;width:1px;height:4px;background:#ffffff;"></div>
<div class="a" style="left:1178px;top:921px;width:1px;height:4px;background:#ffffff;"></div>
<div class="a" style="left:1186px;top:921px;width:1px;height:4px;background:#ffffff;"></div>
<div class="a" style="left:1370px;top:921px;width:1px;height:4px;background:#ffffff;"></div>
<div class="a" style="left:1378px;top:921px;width:1px;height:4px;background:#ffffff;"></div>
<div class="t" style="left:228px;top:911px;font-size:10.5px;color:#f0f0f0;">1</div>
<div class="t" style="left:259.5px;top:911px;font-size:10.5px;color:#e4e4e4;">5</div>
<div class="t" style="left:299.5px;top:911px;font-size:10.5px;color:#e4e4e4;letter-spacing:-0.539px;">10</div>
<div class="t" style="left:339.5px;top:911px;font-size:10.5px;color:#e4e4e4;letter-spacing:-0.539px;">15</div>
<div class="t" style="left:379.5px;top:911px;font-size:10.5px;color:#e4e4e4;letter-spacing:-0.539px;">20</div>
<div class="t" style="left:419.5px;top:911px;font-size:10.5px;color:#e4e4e4;letter-spacing:-0.539px;">25</div>
<div class="t" style="left:459.5px;top:911px;font-size:10.5px;color:#e4e4e4;letter-spacing:-0.539px;">30</div>
<div class="t" style="left:499.5px;top:911px;font-size:10.5px;color:#e4e4e4;letter-spacing:-0.539px;">35</div>
<div class="t" style="left:539.5px;top:911px;font-size:10.5px;color:#e4e4e4;letter-spacing:-0.539px;">40</div>
<div class="t" style="left:579.5px;top:911px;font-size:10.5px;color:#e4e4e4;letter-spacing:-0.539px;">45</div>
<div class="t" style="left:619.5px;top:911px;font-size:10.5px;color:#e4e4e4;letter-spacing:-0.539px;">50</div>
<div class="t" style="left:659.5px;top:911px;font-size:10.5px;color:#e4e4e4;letter-spacing:-0.539px;">55</div>
<div class="t" style="left:699.5px;top:911px;font-size:10.5px;color:#e4e4e4;letter-spacing:-0.539px;">60</div>
<div class="t" style="left:739.5px;top:911px;font-size:10.5px;color:#e4e4e4;letter-spacing:-0.539px;">65</div>
<div class="t" style="left:779.5px;top:911px;font-size:10.5px;color:#e4e4e4;letter-spacing:-0.539px;">70</div>
<div class="t" style="left:819.5px;top:911px;font-size:10.5px;color:#e4e4e4;letter-spacing:-0.539px;">75</div>
<div class="t" style="left:859.5px;top:911px;font-size:10.5px;color:#e4e4e4;letter-spacing:-0.539px;">80</div>
<div class="t" style="left:899.5px;top:911px;font-size:10.5px;color:#e4e4e4;letter-spacing:-0.539px;">85</div>
<div class="t" style="left:939.5px;top:911px;font-size:10.5px;color:#e4e4e4;letter-spacing:-0.539px;">90</div>
<div class="t" style="left:979.5px;top:911px;font-size:10.5px;color:#e4e4e4;letter-spacing:-0.539px;">95</div>
<div class="t" style="left:1019.5px;top:911px;font-size:10.5px;color:#e4e4e4;letter-spacing:-0.539px;">100</div>
<div class="t" style="left:1059.5px;top:911px;font-size:10.5px;color:#e4e4e4;letter-spacing:-0.539px;">105</div>
<div class="t" style="left:1099.5px;top:911px;font-size:10.5px;color:#e4e4e4;letter-spacing:-0.279px;">110</div>
<div class="t" style="left:1139.5px;top:911px;font-size:10.5px;color:#e4e4e4;letter-spacing:-0.279px;">115</div>
<div class="t" style="left:1179.5px;top:911px;font-size:10.5px;color:#e4e4e4;letter-spacing:-0.539px;">120</div>
<div class="t" style="left:1219.5px;top:911px;font-size:10.5px;color:#e4e4e4;letter-spacing:-0.539px;">125</div>
<div class="t" style="left:1259.5px;top:911px;font-size:10.5px;color:#e4e4e4;letter-spacing:-0.539px;">130</div>
<div class="t" style="left:1299.5px;top:911px;font-size:10.5px;color:#e4e4e4;letter-spacing:-0.539px;">135</div>
<div class="t" style="left:1339.5px;top:911px;font-size:10.5px;color:#e4e4e4;letter-spacing:-0.539px;">140</div>
<div class="t" style="left:1379.5px;top:911px;font-size:10.5px;color:#e4e4e4;letter-spacing:-0.539px;">145</div>
<div class="t" style="left:1419.5px;top:911px;font-size:10.5px;color:#e4e4e4;letter-spacing:-0.539px;">150</div>
<div class="t" style="left:1459.5px;top:911px;font-size:10.5px;color:#e4e4e4;letter-spacing:-0.539px;">155</div>
<div class="t" style="left:1499.5px;top:911px;font-size:10.5px;color:#e4e4e4;letter-spacing:-0.539px;">160</div>
<div class="t" style="left:412.5px;top:895px;font-size:10.5px;color:#e4e4e4;letter-spacing:-0.544px;">1s</div>
<div class="t" style="left:604.5px;top:895px;font-size:10.5px;color:#e4e4e4;letter-spacing:-0.544px;">2s</div>
<div class="t" style="left:796.5px;top:895px;font-size:10.5px;color:#e4e4e4;letter-spacing:-0.544px;">3s</div>
<div class="t" style="left:988.5px;top:895px;font-size:10.5px;color:#e4e4e4;letter-spacing:-0.544px;">4s</div>
<div class="t" style="left:1180.5px;top:895px;font-size:10.5px;color:#e4e4e4;letter-spacing:-0.544px;">5s</div>
<div class="t" style="left:1372.5px;top:895px;font-size:10.5px;color:#e4e4e4;letter-spacing:-0.544px;">6s</div>
<div class="a" style="left:227px;top:926px;width:1296px;height:72px;background:#5a5a5a;"></div>
<div class="a" style="left:259px;top:926px;width:7px;height:72px;background:#4d4d4d;"></div>
<div class="a" style="left:299px;top:926px;width:7px;height:72px;background:#4d4d4d;"></div>
<div class="a" style="left:339px;top:926px;width:7px;height:72px;background:#4d4d4d;"></div>
<div class="a" style="left:379px;top:926px;width:7px;height:72px;background:#4d4d4d;"></div>
<div class="a" style="left:419px;top:926px;width:7px;height:72px;background:#4d4d4d;"></div>
<div class="a" style="left:459px;top:926px;width:7px;height:72px;background:#4d4d4d;"></div>
<div class="a" style="left:499px;top:926px;width:7px;height:72px;background:#4d4d4d;"></div>
<div class="a" style="left:539px;top:926px;width:7px;height:72px;background:#4d4d4d;"></div>
<div class="a" style="left:579px;top:926px;width:7px;height:72px;background:#4d4d4d;"></div>
<div class="a" style="left:619px;top:926px;width:7px;height:72px;background:#4d4d4d;"></div>
<div class="a" style="left:659px;top:926px;width:7px;height:72px;background:#4d4d4d;"></div>
<div class="a" style="left:699px;top:926px;width:7px;height:72px;background:#4d4d4d;"></div>
<div class="a" style="left:739px;top:926px;width:7px;height:72px;background:#4d4d4d;"></div>
<div class="a" style="left:779px;top:926px;width:7px;height:72px;background:#4d4d4d;"></div>
<div class="a" style="left:819px;top:926px;width:7px;height:72px;background:#4d4d4d;"></div>
<div class="a" style="left:859px;top:926px;width:7px;height:72px;background:#4d4d4d;"></div>
<div class="a" style="left:899px;top:926px;width:7px;height:72px;background:#4d4d4d;"></div>
<div class="a" style="left:939px;top:926px;width:7px;height:72px;background:#4d4d4d;"></div>
<div class="a" style="left:979px;top:926px;width:7px;height:72px;background:#4d4d4d;"></div>
<div class="a" style="left:1019px;top:926px;width:7px;height:72px;background:#4d4d4d;"></div>
<div class="a" style="left:1059px;top:926px;width:7px;height:72px;background:#4d4d4d;"></div>
<div class="a" style="left:1099px;top:926px;width:7px;height:72px;background:#4d4d4d;"></div>
<div class="a" style="left:1139px;top:926px;width:7px;height:72px;background:#4d4d4d;"></div>
<div class="a" style="left:1179px;top:926px;width:7px;height:72px;background:#4d4d4d;"></div>
<div class="a" style="left:1219px;top:926px;width:7px;height:72px;background:#4d4d4d;"></div>
<div class="a" style="left:1259px;top:926px;width:7px;height:72px;background:#4d4d4d;"></div>
<div class="a" style="left:1299px;top:926px;width:7px;height:72px;background:#4d4d4d;"></div>
<div class="a" style="left:1339px;top:926px;width:7px;height:72px;background:#4d4d4d;"></div>
<div class="a" style="left:1379px;top:926px;width:7px;height:72px;background:#4d4d4d;"></div>
<div class="a" style="left:1419px;top:926px;width:7px;height:72px;background:#4d4d4d;"></div>
<div class="a" style="left:1459px;top:926px;width:7px;height:72px;background:#4d4d4d;"></div>
<div class="a" style="left:1499px;top:926px;width:7px;height:72px;background:#4d4d4d;"></div>
<svg class="a" style="left:227px;top:926px;" width="1296" height="72" viewBox="0 0 1296 72"><path d="M15.5 0V72M23.5 0V72M31.5 0V72M39.5 0V72M47.5 0V72M55.5 0V72M63.5 0V72M71.5 0V72M79.5 0V72M87.5 0V72M95.5 0V72M103.5 0V72M111.5 0V72M119.5 0V72M127.5 0V72M135.5 0V72M143.5 0V72M151.5 0V72M159.5 0V72M167.5 0V72M175.5 0V72M183.5 0V72M191.5 0V72M199.5 0V72M207.5 0V72M215.5 0V72M223.5 0V72M231.5 0V72M239.5 0V72M247.5 0V72M255.5 0V72M263.5 0V72M271.5 0V72M279.5 0V72M287.5 0V72M295.5 0V72M303.5 0V72M311.5 0V72M319.5 0V72M327.5 0V72M335.5 0V72M343.5 0V72M351.5 0V72M359.5 0V72M367.5 0V72M375.5 0V72M383.5 0V72M391.5 0V72M399.5 0V72M407.5 0V72M415.5 0V72M423.5 0V72M431.5 0V72M439.5 0V72M447.5 0V72M455.5 0V72M463.5 0V72M471.5 0V72M479.5 0V72M487.5 0V72M495.5 0V72M503.5 0V72M511.5 0V72M519.5 0V72M527.5 0V72M535.5 0V72M543.5 0V72M551.5 0V72M559.5 0V72M567.5 0V72M575.5 0V72M583.5 0V72M591.5 0V72M599.5 0V72M607.5 0V72M615.5 0V72M623.5 0V72M631.5 0V72M639.5 0V72M647.5 0V72M655.5 0V72M663.5 0V72M671.5 0V72M679.5 0V72M687.5 0V72M695.5 0V72M703.5 0V72M711.5 0V72M719.5 0V72M727.5 0V72M735.5 0V72M743.5 0V72M751.5 0V72M759.5 0V72M767.5 0V72M775.5 0V72M783.5 0V72M791.5 0V72M799.5 0V72M807.5 0V72M815.5 0V72M823.5 0V72M831.5 0V72M839.5 0V72M847.5 0V72M855.5 0V72M863.5 0V72M871.5 0V72M879.5 0V72M887.5 0V72M895.5 0V72M903.5 0V72M911.5 0V72M919.5 0V72M927.5 0V72M935.5 0V72M943.5 0V72M951.5 0V72M959.5 0V72M967.5 0V72M975.5 0V72M983.5 0V72M991.5 0V72M999.5 0V72M1007.5 0V72M1015.5 0V72M1023.5 0V72M1031.5 0V72M1039.5 0V72M1047.5 0V72M1055.5 0V72M1063.5 0V72M1071.5 0V72M1079.5 0V72M1087.5 0V72M1095.5 0V72M1103.5 0V72M1111.5 0V72M1119.5 0V72M1127.5 0V72M1135.5 0V72M1143.5 0V72M1151.5 0V72M1159.5 0V72M1167.5 0V72M1175.5 0V72M1183.5 0V72M1191.5 0V72M1199.5 0V72M1207.5 0V72M1215.5 0V72M1223.5 0V72M1231.5 0V72M1239.5 0V72M1247.5 0V72M1255.5 0V72M1263.5 0V72M1271.5 0V72M1279.5 0V72M1287.5 0V72" stroke="#6a6a6a" stroke-width="1"/><path d="M0 17.5H1296M0 35.5H1296M0 53.5H1296M0 71.5H1296" stroke="#6a6a6a" stroke-width="1"/></svg>
<div class="a" style="left:227px;top:926px;width:8px;height:18px;background:#7d7d7d;border:1px solid #3a3a3a"></div>
<div class="a" style="left:227px;top:944px;width:8px;height:18px;background:#7d7d7d;border:1px solid #3a3a3a"></div>
<div class="a" style="left:227px;top:962px;width:8px;height:18px;background:#7d7d7d;border:1px solid #3a3a3a"></div>
<div class="a" style="left:227px;top:980px;width:8px;height:18px;background:#7d7d7d;border:1px solid #3a3a3a"></div>
<div class="a" style="left:227.5px;top:935px;width:6px;height:6px;background:#000;border-radius:50%"></div>
<div class="a" style="left:228px;top:952px;width:6px;height:6px;border:1.3px solid #000;border-radius:50%"></div>
<div class="t" style="left:228px;top:944px;font-size:8px;color:#ffffff;">α</div>
<div class="a" style="left:227.5px;top:971px;width:6px;height:6px;background:#000;border-radius:50%"></div>
<div class="a" style="left:227.5px;top:989px;width:6px;height:6px;background:#000;border-radius:50%"></div>
<div class="a" style="left:226px;top:894px;width:9px;height:30px;background:rgba(140,40,40,0.6);border:1px solid #d00000"></div>
<div class="t" style="left:228px;top:912px;font-size:10.5px;color:#f0f0f0;">1</div>
<div class="a" style="left:227px;top:998px;width:1296px;height:27px;background:#4f4f4f;"></div>
<div class="a" style="left:230px;top:925px;width:1px;height:100px;background:#d00000;"></div>
<div class="a" style="left:227px;top:1025px;width:1296px;height:1px;background:#5a5a5a;"></div>
<div class="a" style="left:227px;top:1026px;width:1296px;height:12px;background:#4a4a4a;"></div>
<div class="a" style="left:228px;top:1026px;width:316px;height:11px;background:#5f5f5f;border-radius:5px"></div>
<div class="a" style="left:1523px;top:858px;width:13px;height:182px;background:#535353;"></div>
<div class="a" style="left:1539px;top:30px;width:37px;height:1010px;background:#535353;"></div>
<div class="a" style="left:1539px;top:30px;width:37px;height:13px;background:#434343;"></div>
<div class="a" style="left:1576px;top:43px;width:1px;height:997px;background:#383838;"></div>
<div class="a" style="left:1577px;top:43px;width:1px;height:997px;background:#464646;"></div>
<div class="a" style="left:1578px;top:43px;width:1px;height:997px;background:#393939;"></div>
<div class="a" style="left:1539px;top:111px;width:37px;height:1px;background:#3c3c3c;"></div>
<div class="a" style="left:1539px;top:208px;width:37px;height:1px;background:#3c3c3c;"></div>
<div class="a" style="left:1539px;top:249px;width:37px;height:1px;background:#3c3c3c;"></div>
<div class="a" style="left:1539px;top:290px;width:37px;height:1px;background:#3c3c3c;"></div>
<svg class="a" style="left:1548px;top:46px;" width="20" height="4" viewBox="0 0 20 4"><path d="M0.5 0V4M2.5 0V4M4.5 0V4M6.5 0V4M8.5 0V4M10.5 0V4M12.5 0V4M14.5 0V4M16.5 0V4M18.5 0V4" stroke="#464646" stroke-width="1"/></svg>
<svg class="a" style="left:1548px;top:115px;" width="20" height="4" viewBox="0 0 20 4"><path d="M0.5 0V4M2.5 0V4M4.5 0V4M6.5 0V4M8.5 0V4M10.5 0V4M12.5 0V4M14.5 0V4M16.5 0V4M18.5 0V4" stroke="#464646" stroke-width="1"/></svg>
<svg class="a" style="left:1548px;top:212px;" width="20" height="4" viewBox="0 0 20 4"><path d="M0.5 0V4M2.5 0V4M4.5 0V4M6.5 0V4M8.5 0V4M10.5 0V4M12.5 0V4M14.5 0V4M16.5 0V4M18.5 0V4" stroke="#464646" stroke-width="1"/></svg>
<svg class="a" style="left:1548px;top:253px;" width="20" height="4" viewBox="0 0 20 4"><path d="M0.5 0V4M2.5 0V4M4.5 0V4M6.5 0V4M8.5 0V4M10.5 0V4M12.5 0V4M14.5 0V4M16.5 0V4M18.5 0V4" stroke="#464646" stroke-width="1"/></svg>
<svg class="a" style="left:1549px;top:58px;" width="20" height="16" viewBox="0 0 20 16"><path d="M3 14C0 12 0 8 3 6.5C5 5.5 6.5 6 7.5 5C8.5 4 7.5 1.5 10 0.8C14 0 19.5 2.5 19.5 7.5C19.5 12 14.5 14.8 10 14.8C7 14.8 4.5 15 3 14Z" fill="#d2d2d2"/><circle cx="4.8" cy="9.8" r="1.5" fill="#4a4a4a"/><circle cx="9.3" cy="11.2" r="1.5" fill="#4a4a4a"/><circle cx="13.3" cy="10.6" r="1.3" fill="#4a4a4a"/><circle cx="16.5" cy="8.3" r="1.2" fill="#4a4a4a"/><circle cx="15.5" cy="4.7" r="1.1" fill="#4a4a4a"/></svg>
<svg class="a" style="left:1550px;top:89px;" width="16" height="11" viewBox="0 0 16 11"><rect x="0" y="0" width="16" height="11" fill="#d2d2d2"/><rect x="1" y="1" width="4.3" height="4.2" fill="#8a8a8a"/><rect x="5.9" y="1" width="4.3" height="4.2" fill="#c4c4c4"/><rect x="10.7" y="1" width="4.3" height="4.2" fill="#7a7a7a"/><rect x="1" y="5.8" width="4.3" height="4.2" fill="#808080"/><rect x="5.9" y="5.8" width="4.3" height="4.2" fill="#8e8e8e"/><rect x="10.7" y="5.8" width="4.3" height="4.2" fill="#a8a8a8"/></svg>
<svg class="a" style="left:1551px;top:126px;" width="16" height="19" viewBox="0 0 16 19"><rect x="0" y="0" width="1.3" height="19" fill="#d2d2d2"/><rect x="2.5" y="2.8" width="7.5" height="6" fill="#d2d2d2"/><rect x="2.5" y="11" width="12.5" height="5" fill="#d2d2d2"/></svg>
<svg class="a" style="left:1549px;top:155px;" width="17" height="17" viewBox="0 0 17 17"><circle cx="8.5" cy="8.5" r="8.3" fill="#d2d2d2"/><circle cx="8.5" cy="4.5" r="1.6" fill="#535353"/><path d="M6 7.5H9.8V12.5H11V13.8H6V12.5H7.3V8.8H6Z" fill="#535353"/></svg>
<svg class="a" style="left:1550px;top:183px;" width="16" height="17" viewBox="0 0 16 17"><rect x="2" y="2.5" width="12" height="12" fill="none" stroke="#d2d2d2" stroke-width="1.4"/><rect x="0" y="0.5" width="3.5" height="3.5" fill="#d2d2d2"/><rect x="12.5" y="0.5" width="3.5" height="3.5" fill="#d2d2d2"/><rect x="0" y="13" width="3.5" height="3.5" fill="#d2d2d2"/><rect x="12.5" y="13" width="3.5" height="3.5" fill="#d2d2d2"/><rect x="6.5" y="0.5" width="3" height="3" fill="#d2d2d2"/><rect x="6.5" y="13.5" width="3" height="3" fill="#d2d2d2"/><rect x="0.5" y="7" width="3" height="3" fill="#d2d2d2"/><rect x="12.5" y="7" width="3" height="3" fill="#d2d2d2"/><rect x="7.3" y="7.8" width="1.4" height="1.4" fill="#d2d2d2"/></svg>
<svg class="a" style="left:1548px;top:222px;" width="18" height="20" viewBox="0 0 18 20"><circle cx="4.5" cy="15" r="4" fill="#d2d2d2"/><circle cx="12" cy="9.5" r="3" fill="#d2d2d2"/><circle cx="15" cy="3" r="2.2" fill="#d2d2d2"/></svg>
<svg class="a" style="left:1547px;top:265px;" width="22" height="17" viewBox="0 0 22 17"><path d="M6.5 16A6.2 6.2 0 0 1 6.5 3.6A7.2 7.2 0 0 1 19.5 6A5.2 5.2 0 0 1 15.5 16Z" fill="none" stroke="#d2d2d2" stroke-width="1.5"/><path d="M6.5 13.8A4.1 4.1 0 0 1 6.5 5.6A5.2 5.2 0 0 1 17.3 7.2A3.4 3.4 0 0 1 15.2 13.8Z" fill="#d2d2d2"/><path d="M4.3 9.8C6 6.6 9 7.6 10.6 9.8C12.2 12 15 12.2 16.8 9.2" fill="none" stroke="#535353" stroke-width="1.7"/></svg>
<div class="a" style="left:1579px;top:30px;width:301px;height:1010px;background:#535353;"></div>
<div class="a" style="left:1579px;top:30px;width:301px;height:12px;background:#434343;"></div>
<div class="a" style="left:1579px;top:43px;width:301px;height:16px;background:#434343;"></div>
<div class="a" style="left:1579px;top:43px;width:60px;height:17px;background:#535353;"></div>
<div class="a" style="left:1639px;top:43px;width:72px;height:16px;background:#474747;"></div>
<div class="a" style="left:1711px;top:43px;width:1px;height:16px;background:#3c3c3c;"></div>
<div class="t" style="left:1586px;top:47px;font-size:10px;color:#f2f2f2;font-weight:bold;letter-spacing:-0.316px;">Свойства</div>
<div class="t" style="left:1646.7px;top:47px;font-size:10px;color:#a8a8a8;font-weight:bold;letter-spacing:-0.205px;">Библиотека</div>
<svg class="a" style="left:1863px;top:48px;" width="11" height="8" viewBox="0 0 11 8"><path d="M0 0.5H11M0 2.5H11M0 4.5H11M0 6.5H11" stroke="#cfcfcf" stroke-width="1"/></svg>
<div class="a" style="left:1873px;top:60px;width:1px;height:980px;background:#575757;"></div>
<div class="a" style="left:1608px;top:84px;width:16px;height:15px;border:1px solid #d0d0d0"></div>
<div class="t" style="left:1610px;top:88px;font-size:10px;color:#e0e0e0;font-weight:bold;letter-spacing:-0.665px;">An</div>
<div class="t" style="left:1652px;top:73px;font-size:11px;color:#c8c8c8;letter-spacing:0.026px;">Документ</div>
<div class="t" style="left:1652px;top:102px;font-size:11px;color:#c8c8c8;letter-spacing:-0.045px;">Безымянный-2</div>
<div class="a" style="left:1579px;top:123px;width:300px;height:1px;background:#3a3a3a;"></div>
<svg class="a" style="left:1584px;top:131px;" width="9" height="6" viewBox="0 0 9 6"><path d="M0 0H9L4.5 5.5Z" fill="#d2d2d2"/></svg>
<div class="t" style="left:1599.4px;top:128px;font-size:11px;color:#c8c8c8;letter-spacing:0.090px;">Опубликовать</div>
<div class="t" style="left:1596.4px;top:155px;font-size:11px;color:#bcbcbc;letter-spacing:-0.067px;">Профиль:</div>
<div class="t" style="left:1651.9px;top:155px;font-size:11px;color:#bcbcbc;letter-spacing:0.264px;">Default</div>
<div class="a" style="left:1652px;top:169.4px;width:152.7px;height:17.9px;border:1px solid #6c6c6c;border-radius:2px;background:#4f4f4f"></div>
<div class="t" style="left:1660px;top:174px;font-size:11px;color:#efefef;">Параметры публикации...</div>
<div class="a" style="left:1579px;top:195px;width:295px;height:1px;background:#4a4a4a;"></div>
<div class="t" style="left:1617px;top:204px;font-size:11px;color:#bcbcbc;">Цель:</div>
<div class="a" style="left:1652px;top:199.4px;width:94.4px;height:17.9px;background:#474747;border-radius:3px;border:1px solid #575757"></div>
<div class="t" style="left:1659px;top:204px;font-size:11px;color:#efefef;letter-spacing:-0.045px;">Flash Playe...</div>
<svg class="a" style="left:1734px;top:205px;" width="8" height="5" viewBox="0 0 8 5"><path d="M0.6 0.6L4 4L7.4 0.6" fill="none" stroke="#dcdcdc" stroke-width="1.2"/></svg>
<div class="t" style="left:1592px;top:233px;font-size:11px;color:#bcbcbc;">Сценарий:</div>
<div class="a" style="left:1652px;top:227.5px;width:94.4px;height:17.9px;background:#474747;border-radius:3px;border:1px solid #575757"></div>
<div class="t" style="left:1659px;top:233px;font-size:11px;color:#efefef;letter-spacing:0.086px;">ActionScrip...</div>
<svg class="a" style="left:1734px;top:233px;" width="8" height="5" viewBox="0 0 8 5"><path d="M0.6 0.6L4 4L7.4 0.6" fill="none" stroke="#dcdcdc" stroke-width="1.2"/></svg>
<svg class="a" style="left:1755px;top:230px;" width="14" height="14" viewBox="0 0 14 14"><path d="M2 1.5A3.6 3.6 0 0 0 5.5 7L11 12.5A1.2 1.2 0 0 0 13 10.8L7.2 5A3.6 3.6 0 0 0 2.5 0.8L4.5 3L3 4.5Z" fill="#c8c8c8"/></svg>
<div class="a" style="left:1579px;top:256px;width:295px;height:1px;background:#4a4a4a;"></div>
<div class="t" style="left:1614px;top:268px;font-size:11px;color:#bcbcbc;letter-spacing:-0.166px;">Класс:</div>
<div class="a" style="left:1652px;top:262.7px;width:94.4px;height:17.6px;background:#474747;border-radius:3px;border:1px solid #575757"></div>
<svg class="a" style="left:1757px;top:264px;" width="13" height="13" viewBox="0 0 13 13"><path d="M0.5 12.5L2 8.5L9 1.5A1.5 1.5 0 0 1 11.5 4L4.5 11Z" fill="#cfcfcf"/><path d="M2 8.5L4.5 11" stroke="#535353" stroke-width="0.8"/></svg>
<div class="a" style="left:1579px;top:299px;width:300px;height:1px;background:#3a3a3a;"></div>
<svg class="a" style="left:1584px;top:307px;" width="9" height="6" viewBox="0 0 9 6"><path d="M0 0H9L4.5 5.5Z" fill="#d2d2d2"/></svg>
<div class="t" style="left:1599px;top:304px;font-size:11px;color:#c8c8c8;letter-spacing:-0.038px;">Свойства</div>
<div class="t" style="left:1625px;top:331px;font-size:11px;color:#bcbcbc;letter-spacing:-0.862px;">FPS:</div>
<div class="t" style="left:1654px;top:331px;font-size:11px;color:#efefef;letter-spacing:-0.105px;">24,00</div>
<div class="a" style="left:1654px;top:342px;width:27px;height:1px;border-top:1px dotted #cfcfcf"></div>
<div class="a" style="left:1653px;top:357px;width:12px;height:12px;border:1px solid #cfcfcf;border-radius:2px"></div>
<div class="t" style="left:1670px;top:358px;font-size:11px;color:#efefef;letter-spacing:0.058px;">Масштаб. диапазоны кадров</div>
<div class="a" style="left:1579px;top:381px;width:295px;height:1px;background:#4a4a4a;"></div>
<div class="t" style="left:1606px;top:390px;font-size:11px;color:#bcbcbc;letter-spacing:-0.123px;">Размер:</div>
<div class="t" style="left:1653px;top:390px;font-size:11px;color:#bcbcbc;letter-spacing:-0.069px;">Ш:</div>
<div class="t" style="left:1676px;top:390px;font-size:11px;color:#efefef;letter-spacing:-0.450px;">550</div>
<div class="a" style="left:1676px;top:401px;width:17px;height:1px;border-top:1px dotted #cfcfcf"></div>
<svg class="a" style="left:1725px;top:386px;" width="17" height="19" viewBox="0 0 17 19"><path d="M7.4 6.2H4.8A3.2 3.2 0 0 0 4.8 12.6H7.4M9.6 6.2H12.2A3.2 3.2 0 0 1 12.2 12.6H9.6" fill="none" stroke="#d4d4d4" stroke-width="1.6"/><path d="M8.5 2.3V4.8M8.5 14V16.5M5 2.8L6.4 4.2M12 2.8L10.6 4.2M5 16L6.4 14.6M12 16L10.6 14.6" stroke="#d4d4d4" stroke-width="1.1"/></svg>
<div class="t" style="left:1758px;top:390px;font-size:11px;color:#bcbcbc;letter-spacing:-0.197px;">В:</div>
<div class="t" style="left:1782px;top:390px;font-size:11px;color:#efefef;letter-spacing:-0.450px;">400</div>
<div class="a" style="left:1782px;top:401px;width:17px;height:1px;border-top:1px dotted #cfcfcf"></div>
<div class="t" style="left:1838px;top:390px;font-size:11px;color:#bcbcbc;letter-spacing:0.081px;">пикс.</div>
<div class="a" style="left:1653px;top:416px;width:12px;height:12px;border:1px solid #cfcfcf;border-radius:2px"></div>
<div class="t" style="left:1670px;top:417px;font-size:11px;color:#efefef;">Масштаб. содержимое</div>
<div class="a" style="left:1652px;top:441.2px;width:179.6px;height:18.2px;border:1px solid #6c6c6c;border-radius:2px;background:#4f4f4f"></div>
<div class="t" style="left:1687px;top:446px;font-size:11px;color:#efefef;letter-spacing:0.182px;">Дополн. настройки...</div>
<div class="a" style="left:1579px;top:471px;width:295px;height:1px;background:#4a4a4a;"></div>
<div class="t" style="left:1587px;top:481px;font-size:11px;color:#bcbcbc;letter-spacing:0.166px;">Монт. стол:</div>
<div class="a" style="left:1655px;top:478px;width:31px;height:15px;background:#fff;border:1px solid #1e1e1e"></div>
<div class="a" style="left:1656px;top:503px;width:12px;height:12px;border:1px solid #cfcfcf;border-radius:2px"></div>
<div class="t" style="left:1673px;top:504px;font-size:11px;color:#efefef;letter-spacing:0.074px;">Применить к области вставки</div>
<div class="a" style="left:1579px;top:535px;width:300px;height:1px;background:#3a3a3a;"></div>
<svg class="a" style="left:1584px;top:544px;" width="9" height="6" viewBox="0 0 9 6"><path d="M0 0H9L4.5 5.5Z" fill="#d2d2d2"/></svg>
<div class="t" style="left:1599px;top:541px;font-size:11px;color:#c8c8c8;letter-spacing:-0.196px;">История SWF</div>
<div class="a" style="left:1601px;top:559px;width:59.5px;height:18px;background:#575757;border-radius:3px"></div>
<div class="t" style="left:1609.7px;top:562px;font-size:11px;color:#6f6f6f;letter-spacing:0.144px;">Журнал</div>
<div class="a" style="left:1724.5px;top:559px;width:60.2px;height:18px;background:#575757;border-radius:3px"></div>
<div class="t" style="left:1734px;top:562px;font-size:11px;color:#6f6f6f;letter-spacing:-0.213px;">Удалить</div>
<div class="a" style="left:1579px;top:657px;width:300px;height:1px;background:#3a3a3a;"></div>
<svg class="a" style="left:1587px;top:661px;" width="6" height="10" viewBox="0 0 6 10"><path d="M0 0V10L5.5 5Z" fill="#d2d2d2"/></svg>
<div class="t" style="left:1599px;top:662px;font-size:11px;color:#c8c8c8;letter-spacing:-0.039px;">Расширенный доступ</div>
<div class="a" style="left:1879px;top:43px;width:1px;height:997px;background:#383838;"></div>
<div class="a" style="left:1880px;top:43px;width:1px;height:997px;background:#464646;"></div>
<div class="a" style="left:1881px;top:43px;width:1px;height:997px;background:#393939;"></div>
<div class="a" style="left:1882px;top:30px;width:38px;height:1010px;background:#535353;"></div>
<div class="a" style="left:1882px;top:30px;width:38px;height:12px;background:#434343;"></div>
<div class="a" style="left:1882px;top:43px;width:38px;height:16px;background:#474747;"></div>
<svg class="a" style="left:1903px;top:48px;" width="11" height="8" viewBox="0 0 11 8"><path d="M0 0.5H11M0 2.5H11M0 4.5H11M0 6.5H11" stroke="#cfcfcf" stroke-width="1"/></svg>
<div class="a" style="left:1919px;top:30px;width:1px;height:1010px;background:#3a3a3a;"></div>
<div class="a" style="left:1885px;top:205px;width:31px;height:1px;background:#474747;"></div>
<div class="a" style="left:1885px;top:460px;width:31px;height:1px;background:#474747;"></div>
<div class="a" style="left:1885px;top:660px;width:31px;height:1px;background:#474747;"></div>
<div class="a" style="left:1885px;top:751px;width:31px;height:1px;background:#474747;"></div>
<div class="a" style="left:1885px;top:877px;width:31px;height:1px;background:#474747;"></div>
<div class="a" style="left:1885px;top:65px;width:30px;height:24px;background:#2c2c2c;border-radius:3px"></div>
<svg class="a" style="left:1894px;top:69px;" width="13" height="16" viewBox="0 0 13 16"><path d="M1 1L12 8.5L6.5 9L1 15Z" fill="none" stroke="#d8d8d8" stroke-width="1.3" stroke-linejoin="round"/></svg>
<svg class="a" style="left:1894px;top:96px;" width="12" height="18" viewBox="0 0 12 18"><path d="M0.5 0.5L11.5 10L5.5 10.5L0.5 17.5Z" fill="#d0d0d0"/></svg>
<svg class="a" style="left:1891px;top:124px;" width="20" height="18" viewBox="0 0 20 18"><rect x="6.5" y="3.5" width="12" height="12" fill="none" stroke="#cfcfcf" stroke-width="1"/><rect x="5" y="2" width="3" height="3" fill="#cfcfcf"/><rect x="17" y="2" width="3" height="3" fill="#cfcfcf"/><rect x="5" y="14" width="3" height="3" fill="#cfcfcf"/><rect x="17" y="14" width="3" height="3" fill="#cfcfcf"/><rect x="11.3" y="14.2" width="2.5" height="2.5" fill="#cfcfcf"/><rect x="17.3" y="8.3" width="2.5" height="2.5" fill="#cfcfcf"/><path d="M0.5 0.5L10 8L4.5 8.5L0.5 14Z" fill="#cfcfcf"/></svg>
<svg class="a" style="left:1910px;top:141px;" width="4" height="4" viewBox="0 0 4 4"><path d="M4 0V4H0Z" fill="#d8d8d8"/></svg>
<svg class="a" style="left:1891px;top:153px;" width="17" height="16" viewBox="0 0 17 16"><circle cx="8.5" cy="8" r="7.5" fill="#777" stroke="#cfcfcf" stroke-width="1.2"/><ellipse cx="8.5" cy="8" rx="7.5" ry="3" fill="none" stroke="#cfcfcf" stroke-width="1.2"/><ellipse cx="8.5" cy="8" rx="3" ry="7.5" fill="none" stroke="#cfcfcf" stroke-width="1.2"/></svg>
<svg class="a" style="left:1910px;top:168px;" width="4" height="4" viewBox="0 0 4 4"><path d="M4 0V4H0Z" fill="#d8d8d8"/></svg>
<svg class="a" style="left:1891px;top:181px;" width="17" height="17" viewBox="0 0 17 17"><ellipse cx="9" cy="6" rx="7.5" ry="5" fill="none" stroke="#cfcfcf" stroke-width="1.3"/><path d="M4 10C2 11 2 13.5 4 13.5C6 13.5 5 11 3.5 12C2.5 13 4 15 5 16.5" fill="none" stroke="#cfcfcf" stroke-width="1.3"/></svg>
<svg class="a" style="left:1910px;top:196px;" width="4" height="4" viewBox="0 0 4 4"><path d="M4 0V4H0Z" fill="#d8d8d8"/></svg>
<svg class="a" style="left:1891px;top:212px;" width="17" height="17" viewBox="0 0 17 17"><path d="M1 16L3 9L9 4L13 8L8 14Z" fill="#cfcfcf"/><path d="M10 3L12 1L16 5L14 7Z" fill="#cfcfcf"/><path d="M1 16L6 11" stroke="#535353" stroke-width="1"/><circle cx="6.5" cy="10.5" r="1" fill="#535353"/></svg>
<svg class="a" style="left:1910px;top:227px;" width="4" height="4" viewBox="0 0 4 4"><path d="M4 0V4H0Z" fill="#d8d8d8"/></svg>
<svg class="a" style="left:1893px;top:241px;" width="15" height="16" viewBox="0 0 15 16"><path d="M0.5 0.5H14.5V4H13V2H8.6V14H11V15.5H4V14H6.4V2H2V4H0.5Z" fill="#cfcfcf"/></svg>
<svg class="a" style="left:1892px;top:269px;" width="16" height="16" viewBox="0 0 16 16"><path d="M1 15L15 1" stroke="#cfcfcf" stroke-width="1.5"/></svg>
<svg class="a" style="left:1891px;top:297px;" width="17" height="15" viewBox="0 0 17 15"><rect x="0.8" y="0.8" width="15.4" height="13.4" fill="#6b6b6b" stroke="#cfcfcf" stroke-width="1.4"/></svg>
<svg class="a" style="left:1911px;top:312px;" width="4" height="4" viewBox="0 0 4 4"><path d="M4 0V4H0Z" fill="#d8d8d8"/></svg>
<svg class="a" style="left:1891px;top:326px;" width="18" height="14" viewBox="0 0 18 14"><ellipse cx="9" cy="7" rx="8.2" ry="6.2" fill="#6b6b6b" stroke="#cfcfcf" stroke-width="1.4"/></svg>
<svg class="a" style="left:1911px;top:340px;" width="4" height="4" viewBox="0 0 4 4"><path d="M4 0V4H0Z" fill="#d8d8d8"/></svg>
<svg class="a" style="left:1892px;top:353px;" width="16" height="14" viewBox="0 0 16 14"><path d="M4 0.8H12L15.2 7L12 13.2H4L0.8 7Z" fill="#6b6b6b" stroke="#cfcfcf" stroke-width="1.3"/></svg>
<svg class="a" style="left:1892px;top:381px;" width="16" height="16" viewBox="0 0 16 16"><path d="M0.5 15.5L2 10.5L11 1.5L14.5 5L5.5 14Z" fill="#cfcfcf"/><path d="M2 10.5L5.5 14M10 2.5L13.5 6" stroke="#535353" stroke-width="1"/></svg>
<svg class="a" style="left:1890px;top:408px;" width="18" height="17" viewBox="0 0 18 17"><path d="M8 9L15.5 1A1.3 1.3 0 0 1 17 2.5L10 10Z" fill="#cfcfcf"/><path d="M4 10C6 8 9 9 9.5 11C10 14 7 16.5 4 16Z" fill="#cfcfcf"/><path d="M5 1C3 3 1 5 1.5 9C2 12 3 13 4 14" fill="none" stroke="#cfcfcf" stroke-width="1.2"/></svg>
<svg class="a" style="left:1891px;top:432px;" width="17" height="21" viewBox="0 0 17 21"><path d="M8 12L15 1.5A1.2 1.2 0 0 1 16.5 3L10.5 14Z" fill="#cfcfcf"/><path d="M2 20C2 15 5 12 8 13C11 14 10 18 7 19.5Z" fill="#cfcfcf"/></svg>
<svg class="a" style="left:1892px;top:469px;" width="16" height="16" viewBox="0 0 16 16"><path d="M3.5 11L11 3.5" stroke="#cfcfcf" stroke-width="3"/><circle cx="11" cy="2.5" r="2.2" fill="#cfcfcf"/><circle cx="13.5" cy="5" r="2.2" fill="#cfcfcf"/><circle cx="2.5" cy="11" r="2.2" fill="#cfcfcf"/><circle cx="5" cy="13.5" r="2.2" fill="#cfcfcf"/></svg>
<svg class="a" style="left:1911px;top:482px;" width="4" height="4" viewBox="0 0 4 4"><path d="M4 0V4H0Z" fill="#d8d8d8"/></svg>
<svg class="a" style="left:1891px;top:496px;" width="17" height="17" viewBox="0 0 17 17"><path d="M1 9L7 3L13 9L7 15Z" fill="#cfcfcf"/><path d="M5 5L3 1" stroke="#cfcfcf" stroke-width="1.4"/><path d="M11 7C14 7 15 9 15 12A1 1 0 0 1 13 12C13 10 12 9 12 8" fill="#cfcfcf"/></svg>
<svg class="a" style="left:1891px;top:525px;" width="18" height="16" viewBox="0 0 18 16"><path d="M1 5L5 1L10 6L6 10Z" fill="#cfcfcf"/><path d="M3 3L1.5 0.5" stroke="#cfcfcf" stroke-width="1.2"/><path d="M8.5 4.5C10.5 4.5 11 6 11 8" fill="none" stroke="#cfcfcf" stroke-width="1.6"/><path d="M10 10.5H16.5V15H9V12.5" fill="none" stroke="#cfcfcf" stroke-width="1.5"/></svg>
<svg class="a" style="left:1891px;top:552px;" width="17" height="18" viewBox="0 0 17 18"><path d="M1.5 16.5L2 13L10 5L13 8L5 16Z" fill="none" stroke="#cfcfcf" stroke-width="1.4"/><path d="M9.5 4L12 1.5A2.2 2.2 0 0 1 16 5L13.5 7.5Z" fill="#cfcfcf"/><path d="M8.5 3.5L14.5 9.5" stroke="#cfcfcf" stroke-width="1.5"/></svg>
<svg class="a" style="left:1891px;top:580px;" width="18" height="17" viewBox="0 0 18 17"><path d="M1 11L10 2L17 9L8 16Z" fill="#cfcfcf"/><path d="M1 11L5.5 6.5L12.5 13.5L8 16Z" fill="#535353" stroke="#cfcfcf" stroke-width="1.2"/></svg>
<svg class="a" style="left:1891px;top:606px;" width="18" height="17" viewBox="0 0 18 17"><path d="M4 2C6 2 5 7 9 9C11 10 12 7 14 8C17 9 17 13 15 13C15 11 13 11 12 12C9 14 5 13 4 10C3 8 5 6 3 4Z" fill="#cfcfcf"/><circle cx="6" cy="11" r="2" fill="#535353" stroke="#cfcfcf" stroke-width="1"/><rect x="1" y="14" width="3" height="3" fill="none" stroke="#cfcfcf" stroke-width="1"/><circle cx="11" cy="4" r="1.5" fill="none" stroke="#cfcfcf" stroke-width="1"/></svg>
<svg class="a" style="left:1891px;top:636px;" width="17" height="16" viewBox="0 0 17 16"><path d="M1 15.5L6.5 10" stroke="#cfcfcf" stroke-width="1.5"/><path d="M4 7.5L9 2.5L15 8.5L10 13.5Z" fill="#cfcfcf"/><path d="M8 1.5L11 0L16.5 5.5L15 8.5Z" fill="#cfcfcf"/></svg>
<svg class="a" style="left:1891px;top:671px;" width="18" height="11" viewBox="0 0 18 11"><rect x="0" y="0" width="11" height="11" rx="1.5" fill="#6c6c6c"/><path d="M11 5.5L17.5 0.5V10.5Z" fill="#6c6c6c"/></svg>
<svg class="a" style="left:1891px;top:696px;" width="17" height="18" viewBox="0 0 17 18"><path d="M3 9V4A1.2 1.2 0 0 1 5.4 4V8V2A1.2 1.2 0 0 1 7.8 2V8V1.5A1.2 1.2 0 0 1 10.2 1.5V8V3A1.2 1.2 0 0 1 12.6 3V10L14 7.5A1.2 1.2 0 0 1 16 9L13 15C12 17 10 17.5 8 17.5C5 17.5 3 15 3 12Z" fill="#cfcfcf"/></svg>
<svg class="a" style="left:1911px;top:710px;" width="4" height="4" viewBox="0 0 4 4"><path d="M4 0V4H0Z" fill="#d8d8d8"/></svg>
<svg class="a" style="left:1891px;top:724px;" width="17" height="17" viewBox="0 0 17 17"><circle cx="6.5" cy="6.5" r="5.5" fill="none" stroke="#cfcfcf" stroke-width="1.6"/><path d="M10.5 10.5L16 16" stroke="#cfcfcf" stroke-width="2"/></svg>
<svg class="a" style="left:1893px;top:761px;" width="14" height="13" viewBox="0 0 14 13"><path d="M0.5 12.5L2 8.5L9 1.5A1.5 1.5 0 0 1 12 4.5L5 11.5Z" fill="#cfcfcf"/><path d="M2 8.5L5 11.5" stroke="#535353" stroke-width="1"/><path d="M2.5 9.5L6 6" stroke="#7a7a7a" stroke-width="2"/></svg>
<div class="a" style="left:1890px;top:780px;width:20px;height:20px;background:#fff;border:1px solid #222"></div>
<svg class="a" style="left:1891px;top:781px;" width="18" height="18" viewBox="0 0 18 18"><path d="M0.5 17.5L17.5 0.5" stroke="#ff2a2a" stroke-width="1.2"/></svg>
<div class="a" style="left:1890px;top:809px;width:20px;height:18px;background:#2c2c2c;border-radius:3px"></div>
<div class="a" style="left:1895px;top:812px;width:11px;height:11px;border:1.2px solid #d6d6d6;background:#b8b8b8"></div>
<div class="a" style="left:1891px;top:830px;width:19px;height:20px;background:#0a66dc;border:1px solid #1a1a1a"></div>
<svg class="a" style="left:1886px;top:858px;" width="13" height="13" viewBox="0 0 13 13"><rect x="0.5" y="0.5" width="8" height="8" fill="#fff" stroke="#111" stroke-width="1"/><rect x="4.5" y="4.5" width="8" height="8" fill="#111" stroke="#ddd" stroke-width="0"/><rect x="4.5" y="4.5" width="8" height="8" fill="none" stroke="#111"/><rect x="0.5" y="0.5" width="8" height="8" fill="#fff" stroke="#111" stroke-width="1"/></svg>
<svg class="a" style="left:1901px;top:859px;" width="13" height="12" viewBox="0 0 13 12"><rect x="0" y="1" width="4" height="4" fill="#7a7a7a"/><rect x="0" y="7" width="4" height="4" fill="#7a7a7a"/><path d="M6 3C10 3 11 5 11 8M9 6.5L11 9L13 6.5" fill="none" stroke="#7a7a7a" stroke-width="1.3"/></svg>
<div class="a" style="left:1885px;top:885px;width:30px;height:24px;background:#2c2c2c;border-radius:3px"></div>
<svg class="a" style="left:1892px;top:889px;" width="16" height="15" viewBox="0 0 16 15"><path d="M1.5 14V8A6.5 6.5 0 0 1 14.5 8V14H10.5V8A2.5 2.5 0 0 0 5.5 8V14Z" fill="#d8d8d8"/><rect x="1.5" y="11" width="4" height="3" fill="#8a8a8a"/><rect x="10.5" y="11" width="4" height="3" fill="#8a8a8a"/></svg>
<svg class="a" style="left:1895px;top:916px;" width="10" height="17" viewBox="0 0 10 17"><path d="M8 2C6 0.5 2 0.8 2 4C2 7 8 8 8 12C8 15.5 3.5 16 1.5 14.5" fill="none" stroke="#7c7c7c" stroke-width="1.2"/></svg>
<svg class="a" style="left:1896px;top:945px;" width="8" height="16" viewBox="0 0 8 16"><path d="M1 0.5V8H6V15.5" fill="none" stroke="#7c7c7c" stroke-width="1.2"/></svg>
<div class="a" style="left:1539px;top:31px;width:381px;height:11px;background:#424242;"></div>
<div class="a" style="left:1539px;top:42px;width:381px;height:1px;background:#393939;"></div>
<svg class="a" style="left:1562px;top:34px;" width="8" height="5" viewBox="0 0 8 5"><path d="M3.6 0L0 2.5L3.6 5L2.6 2.5ZM7.6 0L4 2.5L7.6 5L6.6 2.5Z" fill="#d4d4d4"/></svg>
<svg class="a" style="left:1866px;top:34px;" width="8" height="5" viewBox="0 0 8 5"><path d="M0.4 0L4 2.5L0.4 5L1.4 2.5ZM4.4 0L8 2.5L4.4 5L5.4 2.5Z" fill="#d4d4d4"/></svg>
<svg class="a" style="left:1906px;top:34px;" width="8" height="5" viewBox="0 0 8 5"><path d="M0.4 0L4 2.5L0.4 5L1.4 2.5ZM4.4 0L8 2.5L4.4 5L5.4 2.5Z" fill="#d4d4d4"/></svg>
</body></html>
